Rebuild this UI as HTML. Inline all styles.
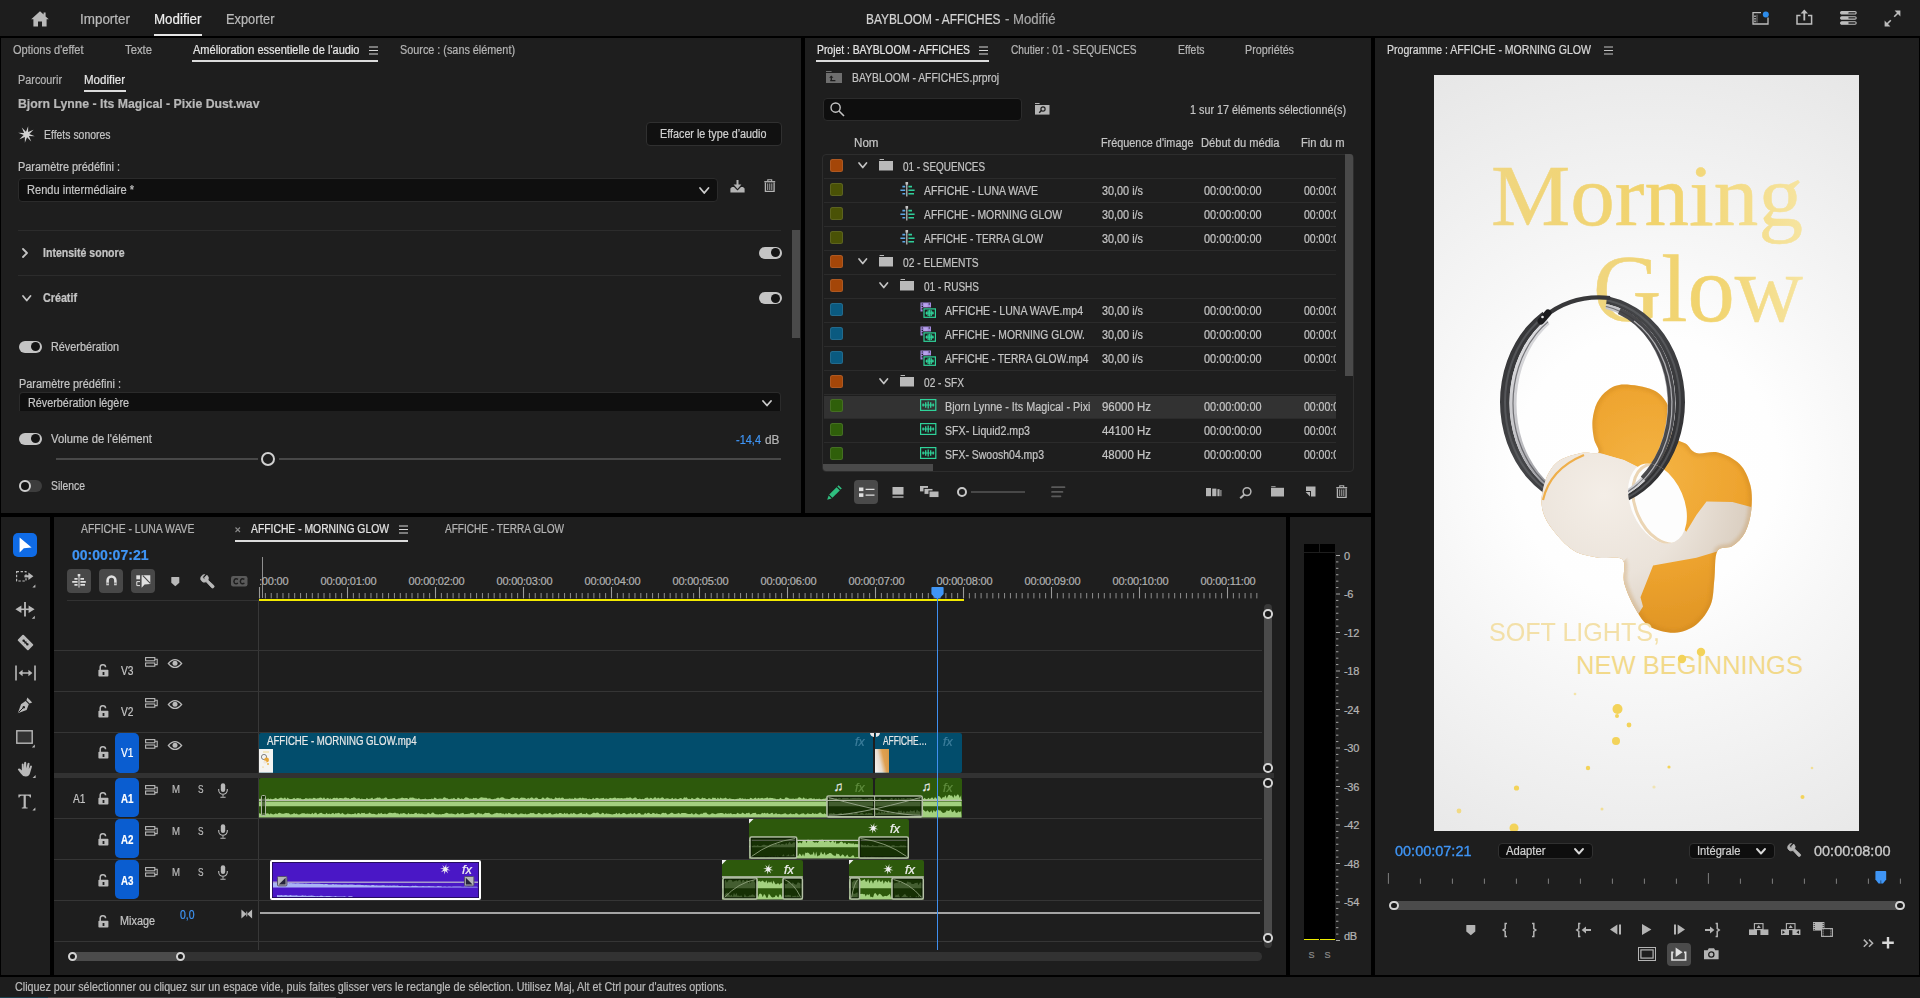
<!DOCTYPE html>
<html lang="fr"><head><meta charset="utf-8"><title>Premiere Pro</title><style>
html,body{margin:0;padding:0}
body{width:1920px;height:998px;background:#000;position:relative;overflow:hidden;font-family:"Liberation Sans",sans-serif;font-size:12px;color:#c4c4c4}
body>div,body>span,body>svg{position:absolute}
span{white-space:nowrap;-webkit-text-stroke-width:0.22px}
svg{overflow:visible}
div{box-sizing:border-box}
</style></head><body>
<div style="left:0px;top:0px;width:1920px;height:36px;background:#1d1d1d;"></div>
<svg style="left:31px;top:10.5px;" width="18" height="16" viewBox="0 0 18 16"><path d="M9 0.3 L0.2 8.3 H2.4 V15.6 H7 V10.6 H11 V15.6 H15.6 V8.3 H17.8 L14.6 5.4 V1.6 H12.6 V3.6 Z" fill="#b9b9b9"/></svg>
<span id="t1" style="left:80px;top:10.0px;font-size:14px;line-height:18px;color:#b9b9b9;transform:scaleX(0.9592);transform-origin:0 50%;">Importer</span>
<span id="t2" style="left:154px;top:10.0px;font-size:14px;line-height:18px;color:#ececec;transform:scaleX(0.9539);transform-origin:0 50%;">Modifier</span>
<div style="left:154px;top:33.5px;width:47.5px;height:2px;background:#e6e6e6;"></div>
<span id="t3" style="left:226px;top:10.0px;font-size:14px;line-height:18px;color:#b9b9b9;transform:scaleX(0.9164);transform-origin:0 50%;">Exporter</span>
<span id="t4" style="left:865.5px;top:10.0px;font-size:14px;line-height:18px;color:#d2d2d2;transform:scaleX(0.8489);transform-origin:0 50%;">BAYBLOOM - AFFICHES</span>
<span id="t5" style="left:1005px;top:10.0px;font-size:14px;line-height:18px;color:#a8a8a8;transform:scaleX(0.9406);transform-origin:0 50%;">- Modifié</span>
<svg style="left:1751.5px;top:9px;" width="18" height="17" viewBox="0 0 18 17"><path d="M9 3.6 H1 V15 H16 V8.5" fill="none" stroke="#bdbdbd" stroke-width="1.3"/><path d="M3 6.4v1.6M3 9v1.6M3 11.6v1.6" stroke="#bdbdbd" stroke-width="1.5"/><path d="M5 5.6V13.6" stroke="#bdbdbd" stroke-width="0.6"/><circle cx="13.8" cy="5.4" r="3" fill="#2d8ceb"/></svg>
<svg style="left:1795.5px;top:9px;" width="17" height="16" viewBox="0 0 17 16"><path d="M4.5 6.5 H1 V15 H15.6 V6.5 H12" fill="none" stroke="#bdbdbd" stroke-width="1.5"/><path d="M8.3 11.5 V2" stroke="#bdbdbd" stroke-width="1.8"/><path d="M4.6 4.6 L8.3 0.6 L12 4.6 Z" fill="#bdbdbd"/></svg>
<svg style="left:1839.5px;top:10.5px;" width="17" height="14" viewBox="0 0 17 14"><g fill="none" stroke="#bdbdbd" stroke-width="1.1"><rect x="0.6" y="0.6" width="15.6" height="2.4" rx="1.2"/><rect x="0.6" y="5.7" width="15.6" height="2.4" rx="1.2"/><rect x="0.6" y="10.8" width="15.6" height="2.4" rx="1.2"/></g><g fill="#bdbdbd"><rect x="0.6" y="0.6" width="8" height="2.4" rx="1.2"/><rect x="0.6" y="5.7" width="8" height="2.4" rx="1.2"/><rect x="0.6" y="10.8" width="8" height="2.4" rx="1.2"/></g></svg>
<svg style="left:1883.5px;top:9.5px;" width="17" height="17" viewBox="0 0 17 17"><path d="M10.2 6.8 L15 2" stroke="#bdbdbd" stroke-width="1.6"/><path d="M10.6 0.6 H16.4 V6.4 Z" fill="#bdbdbd"/><path d="M6.8 10.2 L2 15" stroke="#bdbdbd" stroke-width="1.6"/><path d="M0.6 10.6 V16.4 H6.4 Z" fill="#bdbdbd"/></svg>
<div style="left:0px;top:977px;width:1920px;height:21px;background:#1d1d1d;"></div>
<span id="t6" style="left:15px;top:978.5px;font-size:12px;line-height:16px;color:#b9b9b9;transform:scaleX(0.8944);transform-origin:0 50%;">Cliquez pour sélectionner ou cliquez sur un espace vide, puis faites glisser vers le rectangle de sélection. Utilisez Maj, Alt et Ctrl pour d'autres options.</span>
<div style="left:0px;top:996.7px;width:48px;height:1.3px;background:#1d4450;"></div>
<div style="left:48px;top:996.7px;width:288px;height:1.3px;background:#4c4c4c;"></div>
<div style="left:1px;top:38px;width:800px;height:475px;background:#1e1e1e;"></div>
<span id="t7" style="left:13px;top:42.0px;font-size:12px;line-height:16px;color:#b4b4b4;transform:scaleX(0.9180);transform-origin:0 50%;">Options d'effet</span>
<span id="t8" style="left:125px;top:42.0px;font-size:12px;line-height:16px;color:#b4b4b4;transform:scaleX(0.9412);transform-origin:0 50%;">Texte</span>
<span id="t9" style="left:193px;top:42.0px;font-size:12px;line-height:16px;color:#e4e4e4;transform:scaleX(0.9195);transform-origin:0 50%;">Amélioration essentielle de l'audio</span>
<svg style="left:369px;top:46px;" width="9" height="9" viewBox="0 0 9 9"><path d="M0 1h9M0 4.5h9M0 8h9" stroke="#d8d8d8" stroke-width="1.1"/></svg>
<div style="left:192px;top:60px;width:186px;height:1.5px;background:#dcdcdc;"></div>
<span id="t10" style="left:400px;top:42.0px;font-size:12px;line-height:16px;color:#b4b4b4;transform:scaleX(0.9027);transform-origin:0 50%;">Source : (sans élément)</span>
<span id="t11" style="left:18px;top:72.0px;font-size:12px;line-height:16px;color:#b4b4b4;transform:scaleX(0.9037);transform-origin:0 50%;">Parcourir</span>
<span id="t12" style="left:84px;top:72.0px;font-size:12px;line-height:16px;color:#e4e4e4;transform:scaleX(0.9605);transform-origin:0 50%;">Modifier</span>
<div style="left:84px;top:90px;width:41.5px;height:1.8px;background:#dcdcdc;"></div>
<span id="t13" style="left:18px;top:95.0px;font-size:13.5px;line-height:18px;color:#b8b8b8;font-weight:700;transform:scaleX(0.9085);transform-origin:0 50%;">Bjorn Lynne - Its Magical - Pixie Dust.wav</span>
<svg style="left:18px;top:125.5px;" width="17" height="17" viewBox="0 0 17 17"><polygon points="10.16,0.16 10.11,6.10 15.57,3.78 11.33,7.94 16.84,10.16 10.90,10.11 13.22,15.57 9.06,11.33 6.84,16.84 6.89,10.90 1.43,13.22 5.67,9.06 0.16,6.84 6.10,6.89 3.78,1.43 7.94,5.67" fill="#d0d0d0"/></svg>
<span id="t14" style="left:44px;top:126.5px;font-size:12px;line-height:16px;color:#c4c4c4;transform:scaleX(0.8693);transform-origin:0 50%;">Effets sonores</span>
<div style="left:646px;top:122px;width:135.5px;height:23.6px;background:#111111;border:1px solid #303030;border-radius:4px;"></div>
<span id="t15" style="left:660px;top:126.0px;font-size:12px;line-height:16px;color:#d0d0d0;transform:scaleX(0.8985);transform-origin:0 50%;">Effacer le type d’audio</span>
<span id="t16" style="left:18px;top:159.0px;font-size:12px;line-height:16px;color:#c4c4c4;transform:scaleX(0.9102);transform-origin:0 50%;">Paramètre prédéfini :</span>
<div style="left:18px;top:178px;width:699.5px;height:23.5px;background:#0f0f0f;border:1px solid #2b2b2b;border-radius:4px;"></div>
<span id="t17" style="left:27px;top:181.5px;font-size:12px;line-height:16px;color:#c4c4c4;transform:scaleX(0.9219);transform-origin:0 50%;">Rendu intermédiaire *</span>
<svg style="left:698.5px;top:186.5px;" width="10.5" height="7" viewBox="0 0 10.5 7"><path d="M1 1 L5.25 6 L9.5 1" fill="none" stroke="#cccccc" stroke-width="1.8" stroke-linecap="round" stroke-linejoin="round"/></svg>
<svg style="left:730px;top:179.5px;" width="15" height="13" viewBox="0 0 15 13"><path d="M7.5 0 V7" stroke="#b4b4b4" stroke-width="2"/><path d="M3.6 4.6 L7.5 9 L11.4 4.6 Z" fill="#b4b4b4"/><path d="M0.4 8.4 L2 7 H4 L7.5 10.4 L11 7 H13 L14.6 8.4 V12.6 H0.4 Z" fill="#b4b4b4"/></svg>
<svg style="left:764px;top:179.3px;" width="11.5" height="13" viewBox="0 0 11.5 13"><path d="M0.300 2.700 H11.200" stroke="#b4b4b4" stroke-width="1.300"/><path d="M3.800 2.200 V0.700 H7.700 V2.200" fill="none" stroke="#b4b4b4" stroke-width="1.100"/><path d="M1.400 3.400 V12.300 H10.100 V3.400" fill="none" stroke="#b4b4b4" stroke-width="1.300"/><path d="M3.700 4.400 V11 M5.750 4.400 V11 M7.800 4.400 V11" stroke="#b4b4b4" stroke-width="0.900"/></svg>
<div style="left:18px;top:230px;width:763px;height:1px;background:#2c2c2c;"></div>
<svg style="left:22px;top:247.5px;" width="6" height="10" viewBox="0 0 6 10"><path d="M1 1 L5 5.0 L1 9" fill="none" stroke="#c4c4c4" stroke-width="1.8" stroke-linecap="round" stroke-linejoin="round"/></svg>
<span id="t18" style="left:43px;top:244.5px;font-size:12px;line-height:16px;color:#c4c4c4;font-weight:700;transform:scaleX(0.8793);transform-origin:0 50%;">Intensité sonore</span>
<div style="left:758.5px;top:246.5px;width:23px;height:12.5px;background:#c4c4c4;border-radius:7px;"><i style="position:absolute;right:1.6px;top:1.8px;width:9px;height:9px;border-radius:50%;background:#141414"></i></div>
<div style="left:18px;top:274.5px;width:763px;height:1px;background:#2c2c2c;"></div>
<svg style="left:22px;top:294.5px;" width="9.5" height="6.5" viewBox="0 0 9.5 6.5"><path d="M1 1 L4.75 5.5 L8.5 1" fill="none" stroke="#c4c4c4" stroke-width="1.8" stroke-linecap="round" stroke-linejoin="round"/></svg>
<span id="t19" style="left:43px;top:289.5px;font-size:12px;line-height:16px;color:#c4c4c4;font-weight:700;transform:scaleX(0.8944);transform-origin:0 50%;">Créatif</span>
<div style="left:758.5px;top:291.8px;width:23px;height:12.5px;background:#c4c4c4;border-radius:7px;"><i style="position:absolute;right:1.6px;top:1.8px;width:9px;height:9px;border-radius:50%;background:#141414"></i></div>
<div style="left:791.5px;top:229.5px;width:8px;height:108.5px;background:#4a4a4a;"></div>
<div style="left:19px;top:340.5px;width:23px;height:12.5px;background:#c4c4c4;border-radius:7px;"><i style="position:absolute;right:1.6px;top:1.8px;width:9px;height:9px;border-radius:50%;background:#141414"></i></div>
<span id="t20" style="left:51px;top:339.0px;font-size:12px;line-height:16px;color:#c4c4c4;transform:scaleX(0.9022);transform-origin:0 50%;">Réverbération</span>
<span id="t21" style="left:19px;top:375.5px;font-size:12px;line-height:16px;color:#c4c4c4;transform:scaleX(0.9102);transform-origin:0 50%;">Paramètre prédéfini :</span>
<div style="left:19px;top:391.5px;width:762px;height:19px;background:#0f0f0f;border:1px solid #2b2b2b;border-bottom:none;border-radius:4px 4px 0 0;"></div>
<span id="t22" style="left:28px;top:394.5px;font-size:12px;line-height:16px;color:#c4c4c4;transform:scaleX(0.9012);transform-origin:0 50%;">Réverbération légère</span>
<svg style="left:762px;top:399.5px;" width="10" height="6.5" viewBox="0 0 10 6.5"><path d="M1 1 L5.0 5.5 L9 1" fill="none" stroke="#cccccc" stroke-width="1.8" stroke-linecap="round" stroke-linejoin="round"/></svg>
<div style="left:19px;top:432.5px;width:23px;height:12.5px;background:#c4c4c4;border-radius:7px;"><i style="position:absolute;right:1.6px;top:1.8px;width:9px;height:9px;border-radius:50%;background:#141414"></i></div>
<span id="t23" style="left:51px;top:431.0px;font-size:12px;line-height:16px;color:#c4c4c4;transform:scaleX(0.9378);transform-origin:0 50%;">Volume de l'élément</span>
<span id="t24" style="left:735.5px;top:432.0px;font-size:12px;line-height:16px;color:#3f95f5;transform:scaleX(0.9138);transform-origin:0 50%;">-14,4</span>
<span id="t25" style="left:765px;top:432.0px;font-size:12px;line-height:16px;color:#b4b4b4;transform:scaleX(0.9872);transform-origin:0 50%;">dB</span>
<div style="left:56px;top:458px;width:202px;height:1.5px;background:#484848;"></div>
<div style="left:278.5px;top:458px;width:502.5px;height:1.5px;background:#484848;"></div>
<div style="left:260.5px;top:452px;width:14px;height:14px;background:transparent;border:2px solid #d0d0d0;border-radius:50%;"></div>
<div style="left:19px;top:479.5px;width:23px;height:12.5px;background:#3d3d3d;border-radius:7px;"><i style="position:absolute;left:0;top:0.2px;width:8px;height:8px;border-radius:50%;border:2.1px solid #cdcdcd;background:#141414"></i></div>
<span id="t26" style="left:51px;top:478.0px;font-size:12px;line-height:16px;color:#c4c4c4;transform:scaleX(0.8638);transform-origin:0 50%;">Silence</span>
<div style="left:805px;top:38px;width:566px;height:475px;background:#1e1e1e;"></div>
<span id="t27" style="left:817px;top:42.0px;font-size:12px;line-height:16px;color:#e4e4e4;transform:scaleX(0.8636);transform-origin:0 50%;">Projet : BAYBLOOM - AFFICHES</span>
<svg style="left:979px;top:46px;" width="9" height="9" viewBox="0 0 9 9"><path d="M0 1h9M0 4.5h9M0 8h9" stroke="#d8d8d8" stroke-width="1.1"/></svg>
<div style="left:816px;top:60px;width:172.5px;height:1.5px;background:#dcdcdc;"></div>
<span id="t28" style="left:1011px;top:42.0px;font-size:12px;line-height:16px;color:#b4b4b4;transform:scaleX(0.8476);transform-origin:0 50%;">Chutier : 01 - SEQUENCES</span>
<span id="t29" style="left:1178px;top:42.0px;font-size:12px;line-height:16px;color:#b4b4b4;transform:scaleX(0.8697);transform-origin:0 50%;">Effets</span>
<span id="t30" style="left:1245px;top:42.0px;font-size:12px;line-height:16px;color:#b4b4b4;transform:scaleX(0.8957);transform-origin:0 50%;">Propriétés</span>
<svg style="left:826px;top:71px;" width="16" height="12" viewBox="0 0 16 12"><path d="M0 0.5 H5.6" stroke="#6e6e6e" stroke-width="1"/><rect x="0" y="2" width="16" height="10" fill="#6e6e6e"/><path d="M4.2 9.6 H9.4 M5.3 9.6 V5.6" stroke="#1e1e1e" stroke-width="1.3" fill="none"/><path d="M3.2 6.8 L5.3 4.4 L7.4 6.8 Z" fill="#1e1e1e"/></svg>
<span id="t31" style="left:852px;top:70.0px;font-size:12px;line-height:16px;color:#c4c4c4;transform:scaleX(0.8656);transform-origin:0 50%;">BAYBLOOM - AFFICHES.prproj</span>
<div style="left:822.5px;top:97.5px;width:199px;height:23px;background:#0e0e0e;border:1px solid #2b2b2b;border-radius:4px;"></div>
<svg style="left:830px;top:102px;" width="15" height="15" viewBox="0 0 15 15"><circle cx="5.6" cy="5.6" r="4.6" fill="none" stroke="#c4c4c4" stroke-width="1.4"/><path d="M9 9 L14 14" stroke="#c4c4c4" stroke-width="1.6"/></svg>
<svg style="left:1035px;top:102.5px;" width="14.5" height="12" viewBox="0 0 14.5 12"><path d="M0 0.5 H4.6" stroke="#b4b4b4" stroke-width="1"/><rect x="0" y="2" width="14.5" height="9.6" fill="#b4b4b4"/><circle cx="8" cy="6" r="2.1" fill="none" stroke="#1e1e1e" stroke-width="1.2"/><path d="M6.4 7.6 L4.2 9.8" stroke="#1e1e1e" stroke-width="1.4"/></svg>
<span id="t32" style="left:1190px;top:102.0px;font-size:12px;line-height:16px;color:#c4c4c4;transform:scaleX(0.8995);transform-origin:0 50%;">1 sur 17 éléments sélectionné(s)</span>
<span id="t33" style="left:854px;top:135.0px;font-size:12px;line-height:16px;color:#c4c4c4;transform:scaleX(0.9667);transform-origin:0 50%;">Nom</span>
<span id="t34" style="left:1101px;top:135.0px;font-size:12px;line-height:16px;color:#c4c4c4;transform:scaleX(0.9037);transform-origin:0 50%;">Fréquence d'image</span>
<span id="t35" style="left:1201px;top:135.0px;font-size:12px;line-height:16px;color:#c4c4c4;transform:scaleX(0.9264);transform-origin:0 50%;">Début du média</span>
<span id="t36" style="left:1301px;top:135.0px;font-size:12px;line-height:16px;color:#c4c4c4;transform:scaleX(0.9317);transform-origin:0 50%;">Fin du m</span>
<div style="left:822px;top:153.5px;width:532px;height:318px;background:transparent;border:1px solid #2d2d2d;border-radius:4px;"></div>
<div style="left:1345px;top:154px;width:8px;height:222px;background:#4a4a4a;border-radius:0 3px 0 0;"></div>
<div style="left:823px;top:463.5px;width:110px;height:7.5px;background:#4a4a4a;border-radius:0 0 0 3px;"></div>
<div style="left:830px;top:158.7px;width:13px;height:13px;background:#a44608;border-radius:2.5px;border:1px solid rgba(255,255,255,0.10);"></div>
<svg style="left:858px;top:162.0px;" width="9.5" height="6.5" viewBox="0 0 9.5 6.5"><path d="M1 1 L4.75 5.5 L8.5 1" fill="none" stroke="#c4c4c4" stroke-width="1.7" stroke-linecap="round" stroke-linejoin="round"/></svg>
<svg style="left:879px;top:159.0px;" width="14" height="11.5" viewBox="0 0 14 11.5"><path d="M0.6 0.5 H5" stroke="#b9b9b9" stroke-width="1"/><rect x="0" y="2" width="14" height="9.5" fill="#b9b9b9"/></svg>
<span id="t37" style="left:903px;top:159.0px;font-size:12px;line-height:16px;color:#c4c4c4;transform:scaleX(0.8252);transform-origin:0 50%;">01 - SEQUENCES</span>
<div style="left:824px;top:178.0px;width:512px;height:1px;background:#2b2b2b;"></div>
<div style="left:830px;top:182.7px;width:13px;height:13px;background:#4a5206;border-radius:2.5px;border:1px solid rgba(255,255,255,0.10);"></div>
<svg style="left:899.5px;top:182.0px;" width="15" height="15" viewBox="0 0 15 15"><path d="M6.8 1.5 V14.5" stroke="#c4c4c4" stroke-width="1.2"/><rect x="5.5" y="0" width="2.6" height="2.6" fill="#c4c4c4"/><path d="M2.4 4.6 H5.2 M0.4 8.2 H5.2 M2.4 11.8 H5.2" stroke="#5fa8e6" stroke-width="1.6"/><path d="M8.4 4.6 H12 M8.4 8.2 H14.6 M8.4 11.8 H14" stroke="#2fcf9a" stroke-width="1.6"/></svg>
<span id="t38" style="left:924px;top:183.0px;font-size:12px;line-height:16px;color:#c4c4c4;transform:scaleX(0.8723);transform-origin:0 50%;">AFFICHE - LUNA WAVE</span>
<span id="t39" style="left:1102px;top:182.5px;font-size:12px;line-height:16px;color:#c4c4c4;transform:scaleX(0.9036);transform-origin:0 50%;">30,00 i/s</span>
<span id="t40" style="left:1204px;top:182.5px;font-size:12px;line-height:16px;color:#c4c4c4;transform:scaleX(0.9069);transform-origin:0 50%;">00:00:00:00</span>
<span id="t41" style="left:1304px;top:182.5px;font-size:12px;line-height:16px;color:#c4c4c4;transform:scaleX(0.8740);transform-origin:0 50%;">00:00:0</span>
<div style="left:824px;top:202.0px;width:512px;height:1px;background:#2b2b2b;"></div>
<div style="left:830px;top:206.7px;width:13px;height:13px;background:#4a5206;border-radius:2.5px;border:1px solid rgba(255,255,255,0.10);"></div>
<svg style="left:899.5px;top:206.0px;" width="15" height="15" viewBox="0 0 15 15"><path d="M6.8 1.5 V14.5" stroke="#c4c4c4" stroke-width="1.2"/><rect x="5.5" y="0" width="2.6" height="2.6" fill="#c4c4c4"/><path d="M2.4 4.6 H5.2 M0.4 8.2 H5.2 M2.4 11.8 H5.2" stroke="#5fa8e6" stroke-width="1.6"/><path d="M8.4 4.6 H12 M8.4 8.2 H14.6 M8.4 11.8 H14" stroke="#2fcf9a" stroke-width="1.6"/></svg>
<span id="t42" style="left:924px;top:207.0px;font-size:12px;line-height:16px;color:#c4c4c4;transform:scaleX(0.8625);transform-origin:0 50%;">AFFICHE - MORNING GLOW</span>
<span id="t43" style="left:1102px;top:206.5px;font-size:12px;line-height:16px;color:#c4c4c4;transform:scaleX(0.9036);transform-origin:0 50%;">30,00 i/s</span>
<span id="t44" style="left:1204px;top:206.5px;font-size:12px;line-height:16px;color:#c4c4c4;transform:scaleX(0.9069);transform-origin:0 50%;">00:00:00:00</span>
<span id="t45" style="left:1304px;top:206.5px;font-size:12px;line-height:16px;color:#c4c4c4;transform:scaleX(0.8740);transform-origin:0 50%;">00:00:0</span>
<div style="left:824px;top:226.0px;width:512px;height:1px;background:#2b2b2b;"></div>
<div style="left:830px;top:230.7px;width:13px;height:13px;background:#4a5206;border-radius:2.5px;border:1px solid rgba(255,255,255,0.10);"></div>
<svg style="left:899.5px;top:230.0px;" width="15" height="15" viewBox="0 0 15 15"><path d="M6.8 1.5 V14.5" stroke="#c4c4c4" stroke-width="1.2"/><rect x="5.5" y="0" width="2.6" height="2.6" fill="#c4c4c4"/><path d="M2.4 4.6 H5.2 M0.4 8.2 H5.2 M2.4 11.8 H5.2" stroke="#5fa8e6" stroke-width="1.6"/><path d="M8.4 4.6 H12 M8.4 8.2 H14.6 M8.4 11.8 H14" stroke="#2fcf9a" stroke-width="1.6"/></svg>
<span id="t46" style="left:924px;top:231.0px;font-size:12px;line-height:16px;color:#c4c4c4;transform:scaleX(0.8392);transform-origin:0 50%;">AFFICHE - TERRA GLOW</span>
<span id="t47" style="left:1102px;top:230.5px;font-size:12px;line-height:16px;color:#c4c4c4;transform:scaleX(0.9036);transform-origin:0 50%;">30,00 i/s</span>
<span id="t48" style="left:1204px;top:230.5px;font-size:12px;line-height:16px;color:#c4c4c4;transform:scaleX(0.9069);transform-origin:0 50%;">00:00:00:00</span>
<span id="t49" style="left:1304px;top:230.5px;font-size:12px;line-height:16px;color:#c4c4c4;transform:scaleX(0.8740);transform-origin:0 50%;">00:00:0</span>
<div style="left:824px;top:250.0px;width:512px;height:1px;background:#2b2b2b;"></div>
<div style="left:830px;top:254.7px;width:13px;height:13px;background:#a44608;border-radius:2.5px;border:1px solid rgba(255,255,255,0.10);"></div>
<svg style="left:858px;top:258.0px;" width="9.5" height="6.5" viewBox="0 0 9.5 6.5"><path d="M1 1 L4.75 5.5 L8.5 1" fill="none" stroke="#c4c4c4" stroke-width="1.7" stroke-linecap="round" stroke-linejoin="round"/></svg>
<svg style="left:879px;top:255.0px;" width="14" height="11.5" viewBox="0 0 14 11.5"><path d="M0.6 0.5 H5" stroke="#b9b9b9" stroke-width="1"/><rect x="0" y="2" width="14" height="9.5" fill="#b9b9b9"/></svg>
<span id="t50" style="left:903px;top:255.0px;font-size:12px;line-height:16px;color:#c4c4c4;transform:scaleX(0.8512);transform-origin:0 50%;">02 - ELEMENTS</span>
<div style="left:824px;top:274.0px;width:512px;height:1px;background:#2b2b2b;"></div>
<div style="left:830px;top:278.7px;width:13px;height:13px;background:#a44608;border-radius:2.5px;border:1px solid rgba(255,255,255,0.10);"></div>
<svg style="left:879px;top:282.0px;" width="9.5" height="6.5" viewBox="0 0 9.5 6.5"><path d="M1 1 L4.75 5.5 L8.5 1" fill="none" stroke="#c4c4c4" stroke-width="1.7" stroke-linecap="round" stroke-linejoin="round"/></svg>
<svg style="left:900px;top:279.0px;" width="14" height="11.5" viewBox="0 0 14 11.5"><path d="M0.6 0.5 H5" stroke="#b9b9b9" stroke-width="1"/><rect x="0" y="2" width="14" height="9.5" fill="#b9b9b9"/></svg>
<span id="t51" style="left:924px;top:279.0px;font-size:12px;line-height:16px;color:#c4c4c4;transform:scaleX(0.8329);transform-origin:0 50%;">01 - RUSHS</span>
<div style="left:824px;top:298.0px;width:512px;height:1px;background:#2b2b2b;"></div>
<div style="left:830px;top:302.7px;width:13px;height:13px;background:#0a5a80;border-radius:2.5px;border:1px solid rgba(255,255,255,0.10);"></div>
<svg style="left:919.5px;top:301.5px;" width="17" height="17" viewBox="0 0 17 17"><rect x="0.5" y="0.5" width="10.5" height="9" fill="#a48be0"/><path d="M1.6 2 h1.4 M1.6 4.4 h1.4 M1.6 6.8 h1.4 M8.6 2 h1.4" stroke="#1e1e1e" stroke-width="1.2"/><rect x="4" y="1.6" width="3.6" height="5.4" fill="#b9a4ea"/><rect x="2.6" y="5.4" width="14" height="11" fill="#1e1e1e"/><rect x="4" y="6.9" width="11.4" height="8.4" fill="none" stroke="#2fd39a" stroke-width="1.2"/><path d="M5.5 11.100000000000001 H13.9" stroke="#2fd39a" stroke-width="1"/><path d="M6.60 9.600000000000001 V12.600000000000001" stroke="#2fd39a" stroke-width="1.3"/><path d="M8.15 8.3 V13.900000000000002" stroke="#2fd39a" stroke-width="1.3"/><path d="M9.70 7.700000000000001 V14.500000000000002" stroke="#2fd39a" stroke-width="1.3"/><path d="M11.25 8.3 V13.900000000000002" stroke="#2fd39a" stroke-width="1.3"/><path d="M12.80 9.600000000000001 V12.600000000000001" stroke="#2fd39a" stroke-width="1.3"/></svg>
<span id="t52" style="left:945px;top:303.0px;font-size:12px;line-height:16px;color:#c4c4c4;transform:scaleX(0.8770);transform-origin:0 50%;">AFFICHE - LUNA WAVE.mp4</span>
<span id="t53" style="left:1102px;top:302.5px;font-size:12px;line-height:16px;color:#c4c4c4;transform:scaleX(0.9036);transform-origin:0 50%;">30,00 i/s</span>
<span id="t54" style="left:1204px;top:302.5px;font-size:12px;line-height:16px;color:#c4c4c4;transform:scaleX(0.9069);transform-origin:0 50%;">00:00:00:00</span>
<span id="t55" style="left:1304px;top:302.5px;font-size:12px;line-height:16px;color:#c4c4c4;transform:scaleX(0.8740);transform-origin:0 50%;">00:00:0</span>
<div style="left:824px;top:322.0px;width:512px;height:1px;background:#2b2b2b;"></div>
<div style="left:830px;top:326.7px;width:13px;height:13px;background:#0a5a80;border-radius:2.5px;border:1px solid rgba(255,255,255,0.10);"></div>
<svg style="left:919.5px;top:325.5px;" width="17" height="17" viewBox="0 0 17 17"><rect x="0.5" y="0.5" width="10.5" height="9" fill="#a48be0"/><path d="M1.6 2 h1.4 M1.6 4.4 h1.4 M1.6 6.8 h1.4 M8.6 2 h1.4" stroke="#1e1e1e" stroke-width="1.2"/><rect x="4" y="1.6" width="3.6" height="5.4" fill="#b9a4ea"/><rect x="2.6" y="5.4" width="14" height="11" fill="#1e1e1e"/><rect x="4" y="6.9" width="11.4" height="8.4" fill="none" stroke="#2fd39a" stroke-width="1.2"/><path d="M5.5 11.100000000000001 H13.9" stroke="#2fd39a" stroke-width="1"/><path d="M6.60 9.600000000000001 V12.600000000000001" stroke="#2fd39a" stroke-width="1.3"/><path d="M8.15 8.3 V13.900000000000002" stroke="#2fd39a" stroke-width="1.3"/><path d="M9.70 7.700000000000001 V14.500000000000002" stroke="#2fd39a" stroke-width="1.3"/><path d="M11.25 8.3 V13.900000000000002" stroke="#2fd39a" stroke-width="1.3"/><path d="M12.80 9.600000000000001 V12.600000000000001" stroke="#2fd39a" stroke-width="1.3"/></svg>
<span id="t56" style="left:945px;top:327.0px;font-size:12px;line-height:16px;color:#c4c4c4;transform:scaleX(0.8606);transform-origin:0 50%;">AFFICHE - MORNING GLOW.</span>
<span id="t57" style="left:1102px;top:326.5px;font-size:12px;line-height:16px;color:#c4c4c4;transform:scaleX(0.9036);transform-origin:0 50%;">30,00 i/s</span>
<span id="t58" style="left:1204px;top:326.5px;font-size:12px;line-height:16px;color:#c4c4c4;transform:scaleX(0.9069);transform-origin:0 50%;">00:00:00:00</span>
<span id="t59" style="left:1304px;top:326.5px;font-size:12px;line-height:16px;color:#c4c4c4;transform:scaleX(0.8740);transform-origin:0 50%;">00:00:0</span>
<div style="left:824px;top:346.0px;width:512px;height:1px;background:#2b2b2b;"></div>
<div style="left:830px;top:350.7px;width:13px;height:13px;background:#0a5a80;border-radius:2.5px;border:1px solid rgba(255,255,255,0.10);"></div>
<svg style="left:919.5px;top:349.5px;" width="17" height="17" viewBox="0 0 17 17"><rect x="0.5" y="0.5" width="10.5" height="9" fill="#a48be0"/><path d="M1.6 2 h1.4 M1.6 4.4 h1.4 M1.6 6.8 h1.4 M8.6 2 h1.4" stroke="#1e1e1e" stroke-width="1.2"/><rect x="4" y="1.6" width="3.6" height="5.4" fill="#b9a4ea"/><rect x="2.6" y="5.4" width="14" height="11" fill="#1e1e1e"/><rect x="4" y="6.9" width="11.4" height="8.4" fill="none" stroke="#2fd39a" stroke-width="1.2"/><path d="M5.5 11.100000000000001 H13.9" stroke="#2fd39a" stroke-width="1"/><path d="M6.60 9.600000000000001 V12.600000000000001" stroke="#2fd39a" stroke-width="1.3"/><path d="M8.15 8.3 V13.900000000000002" stroke="#2fd39a" stroke-width="1.3"/><path d="M9.70 7.700000000000001 V14.500000000000002" stroke="#2fd39a" stroke-width="1.3"/><path d="M11.25 8.3 V13.900000000000002" stroke="#2fd39a" stroke-width="1.3"/><path d="M12.80 9.600000000000001 V12.600000000000001" stroke="#2fd39a" stroke-width="1.3"/></svg>
<span id="t60" style="left:945px;top:351.0px;font-size:12px;line-height:16px;color:#c4c4c4;transform:scaleX(0.8551);transform-origin:0 50%;">AFFICHE - TERRA GLOW.mp4</span>
<span id="t61" style="left:1102px;top:350.5px;font-size:12px;line-height:16px;color:#c4c4c4;transform:scaleX(0.9036);transform-origin:0 50%;">30,00 i/s</span>
<span id="t62" style="left:1204px;top:350.5px;font-size:12px;line-height:16px;color:#c4c4c4;transform:scaleX(0.9069);transform-origin:0 50%;">00:00:00:00</span>
<span id="t63" style="left:1304px;top:350.5px;font-size:12px;line-height:16px;color:#c4c4c4;transform:scaleX(0.8740);transform-origin:0 50%;">00:00:0</span>
<div style="left:824px;top:370.0px;width:512px;height:1px;background:#2b2b2b;"></div>
<div style="left:830px;top:374.7px;width:13px;height:13px;background:#a44608;border-radius:2.5px;border:1px solid rgba(255,255,255,0.10);"></div>
<svg style="left:879px;top:378.0px;" width="9.5" height="6.5" viewBox="0 0 9.5 6.5"><path d="M1 1 L4.75 5.5 L8.5 1" fill="none" stroke="#c4c4c4" stroke-width="1.7" stroke-linecap="round" stroke-linejoin="round"/></svg>
<svg style="left:900px;top:375.0px;" width="14" height="11.5" viewBox="0 0 14 11.5"><path d="M0.6 0.5 H5" stroke="#b9b9b9" stroke-width="1"/><rect x="0" y="2" width="14" height="9.5" fill="#b9b9b9"/></svg>
<span id="t64" style="left:924px;top:375.0px;font-size:12px;line-height:16px;color:#c4c4c4;transform:scaleX(0.8446);transform-origin:0 50%;">02 - SFX</span>
<div style="left:823.5px;top:395.5px;width:512.5px;height:22.8px;background:#323232;"></div>
<div style="left:824px;top:394.0px;width:512px;height:1px;background:#2b2b2b;"></div>
<div style="left:830px;top:398.7px;width:13px;height:13px;background:#2f5f0a;border-radius:2.5px;border:1px solid rgba(255,255,255,0.10);"></div>
<svg style="left:919.5px;top:398.9px;" width="17" height="13" viewBox="0 0 17 13"><rect x="0.6" y="0.6" width="15.2" height="10.8" fill="none" stroke="#2fd39a" stroke-width="1.2"/><path d="M2.1 6.0 H14.299999999999999" stroke="#2fd39a" stroke-width="1"/><path d="M3.20 4.5 V7.5" stroke="#2fd39a" stroke-width="1.3"/><path d="M5.70 3.2 V8.8" stroke="#2fd39a" stroke-width="1.3"/><path d="M8.20 2.6 V9.4" stroke="#2fd39a" stroke-width="1.3"/><path d="M10.70 3.2 V8.8" stroke="#2fd39a" stroke-width="1.3"/><path d="M13.20 4.5 V7.5" stroke="#2fd39a" stroke-width="1.3"/></svg>
<span id="t65" style="left:945px;top:399.0px;font-size:12px;line-height:16px;color:#c4c4c4;transform:scaleX(0.9002);transform-origin:0 50%;">Bjorn Lynne - Its Magical - Pixi</span>
<span id="t66" style="left:1102px;top:398.5px;font-size:12px;line-height:16px;color:#c4c4c4;transform:scaleX(0.9538);transform-origin:0 50%;">96000  Hz</span>
<span id="t67" style="left:1204px;top:398.5px;font-size:12px;line-height:16px;color:#c4c4c4;transform:scaleX(0.9069);transform-origin:0 50%;">00:00:00:00</span>
<span id="t68" style="left:1304px;top:398.5px;font-size:12px;line-height:16px;color:#c4c4c4;transform:scaleX(0.8740);transform-origin:0 50%;">00:00:0</span>
<div style="left:824px;top:418.0px;width:512px;height:1px;background:#2b2b2b;"></div>
<div style="left:830px;top:422.7px;width:13px;height:13px;background:#2f5f0a;border-radius:2.5px;border:1px solid rgba(255,255,255,0.10);"></div>
<svg style="left:919.5px;top:422.9px;" width="17" height="13" viewBox="0 0 17 13"><rect x="0.6" y="0.6" width="15.2" height="10.8" fill="none" stroke="#2fd39a" stroke-width="1.2"/><path d="M2.1 6.0 H14.299999999999999" stroke="#2fd39a" stroke-width="1"/><path d="M3.20 4.5 V7.5" stroke="#2fd39a" stroke-width="1.3"/><path d="M5.70 3.2 V8.8" stroke="#2fd39a" stroke-width="1.3"/><path d="M8.20 2.6 V9.4" stroke="#2fd39a" stroke-width="1.3"/><path d="M10.70 3.2 V8.8" stroke="#2fd39a" stroke-width="1.3"/><path d="M13.20 4.5 V7.5" stroke="#2fd39a" stroke-width="1.3"/></svg>
<span id="t69" style="left:945px;top:423.0px;font-size:12px;line-height:16px;color:#c4c4c4;transform:scaleX(0.8850);transform-origin:0 50%;">SFX- Liquid2.mp3</span>
<span id="t70" style="left:1102px;top:422.5px;font-size:12px;line-height:16px;color:#c4c4c4;transform:scaleX(0.9538);transform-origin:0 50%;">44100  Hz</span>
<span id="t71" style="left:1204px;top:422.5px;font-size:12px;line-height:16px;color:#c4c4c4;transform:scaleX(0.9069);transform-origin:0 50%;">00:00:00:00</span>
<span id="t72" style="left:1304px;top:422.5px;font-size:12px;line-height:16px;color:#c4c4c4;transform:scaleX(0.8740);transform-origin:0 50%;">00:00:0</span>
<div style="left:824px;top:442.0px;width:512px;height:1px;background:#2b2b2b;"></div>
<div style="left:830px;top:446.7px;width:13px;height:13px;background:#2f5f0a;border-radius:2.5px;border:1px solid rgba(255,255,255,0.10);"></div>
<svg style="left:919.5px;top:446.9px;" width="17" height="13" viewBox="0 0 17 13"><rect x="0.6" y="0.6" width="15.2" height="10.8" fill="none" stroke="#2fd39a" stroke-width="1.2"/><path d="M2.1 6.0 H14.299999999999999" stroke="#2fd39a" stroke-width="1"/><path d="M3.20 4.5 V7.5" stroke="#2fd39a" stroke-width="1.3"/><path d="M5.70 3.2 V8.8" stroke="#2fd39a" stroke-width="1.3"/><path d="M8.20 2.6 V9.4" stroke="#2fd39a" stroke-width="1.3"/><path d="M10.70 3.2 V8.8" stroke="#2fd39a" stroke-width="1.3"/><path d="M13.20 4.5 V7.5" stroke="#2fd39a" stroke-width="1.3"/></svg>
<span id="t73" style="left:945px;top:447.0px;font-size:12px;line-height:16px;color:#c4c4c4;transform:scaleX(0.8731);transform-origin:0 50%;">SFX- Swoosh04.mp3</span>
<span id="t74" style="left:1102px;top:446.5px;font-size:12px;line-height:16px;color:#c4c4c4;transform:scaleX(0.9538);transform-origin:0 50%;">48000  Hz</span>
<span id="t75" style="left:1204px;top:446.5px;font-size:12px;line-height:16px;color:#c4c4c4;transform:scaleX(0.9069);transform-origin:0 50%;">00:00:00:00</span>
<span id="t76" style="left:1304px;top:446.5px;font-size:12px;line-height:16px;color:#c4c4c4;transform:scaleX(0.8740);transform-origin:0 50%;">00:00:0</span>
<div style="left:1336px;top:155px;width:9px;height:308px;background:#1e1e1e;"></div>
<svg style="left:826.5px;top:485px;" width="15" height="15" viewBox="0 0 15 15"><path d="M2.2 9.6 L9.6 2.2 L12.8 5.4 L5.4 12.8 Z" fill="#2fbf7f"/><path d="M10.4 1.4 L11.6 0.2 L14.8 3.4 L13.6 4.6 Z" fill="#2fbf7f"/><path d="M1.6 10.4 L4.6 13.4 L0.2 14.8 Z" fill="#2fbf7f"/></svg>
<div style="left:854px;top:479.8px;width:24px;height:24px;background:#4a4a4a;border-radius:4px;"></div>
<svg style="left:858.5px;top:486.5px;" width="16" height="11" viewBox="0 0 16 11"><rect x="0" y="0.5" width="4.4" height="3.6" fill="#e0e0e0"/><rect x="0" y="6.3" width="4.4" height="3.6" fill="#e0e0e0"/><path d="M6.6 2.3 H15.5 M6.6 8.1 H15.5" stroke="#e0e0e0" stroke-width="1.3"/></svg>
<svg style="left:892px;top:486.5px;" width="12" height="11" viewBox="0 0 12 11"><rect x="0.5" y="0" width="11" height="7.6" fill="#b9b9b9"/><path d="M0.5 10 H11.5" stroke="#b9b9b9" stroke-width="1.4"/></svg>
<svg style="left:920px;top:486px;" width="20" height="12" viewBox="0 0 20 12"><rect x="0" y="0" width="8" height="5.4" fill="#b9b9b9"/><rect x="4" y="2.4" width="9" height="6" fill="#b9b9b9" stroke="#1e1e1e" stroke-width="1"/><rect x="9" y="5" width="10" height="6.6" fill="#b9b9b9" stroke="#1e1e1e" stroke-width="1"/></svg>
<div style="left:956.8px;top:486.8px;width:10.4px;height:10.4px;background:transparent;border:2.2px solid #c9c9c9;border-radius:50%;"></div>
<div style="left:971px;top:491px;width:54px;height:2px;background:#484848;"></div>
<svg style="left:1051.5px;top:486px;" width="13" height="12" viewBox="0 0 13 12"><path d="M0 1.200 H12.500 M0 5.900 H10.500 M0 10.300 H8.500" stroke="#5a5a5a" stroke-width="1.700" stroke-linecap="round"/></svg>
<svg style="left:1205.8px;top:487.8px;" width="16" height="8.5" viewBox="0 0 16 8.5"><rect x="0" y="0" width="5" height="8.2" fill="#b4b4b4"/><rect x="6.2" y="0.6" width="4.2" height="7.600" fill="#b4b4b4"/><rect x="11.400" y="1.200" width="2.200" height="7" fill="#b4b4b4"/><rect x="14.400" y="2" width="1" height="6.200" fill="#b4b4b4"/></svg>
<svg style="left:1239px;top:485.5px;" width="14" height="14" viewBox="0 0 14 14"><circle cx="8" cy="5.600" r="3.900" fill="none" stroke="#b4b4b4" stroke-width="1.500"/><path d="M5.400 8.400 L1.200 12.200" stroke="#b4b4b4" stroke-width="2"/></svg>
<svg style="left:1271px;top:486px;" width="13" height="10.5" viewBox="0 0 13 10.5"><path d="M0.200 0.600 H4.600" stroke="#8e8e8e" stroke-width="1.200"/><rect x="0" y="1.800" width="13" height="8.700" fill="#b4b4b4"/></svg>
<svg style="left:1304.5px;top:486px;" width="11" height="11" viewBox="0 0 11 11"><path d="M1 0.5 H10.5 V10.500 H6 V5 H1 Z" fill="#b4b4b4"/><path d="M0.600 6 L5 6 L5 10.400 Z" fill="#b4b4b4"/></svg>
<svg style="left:1336px;top:484.8px;" width="11.5" height="13" viewBox="0 0 11.5 13"><path d="M0.300 2.700 H11.200" stroke="#b4b4b4" stroke-width="1.300"/><path d="M3.800 2.200 V0.700 H7.700 V2.200" fill="none" stroke="#b4b4b4" stroke-width="1.100"/><path d="M1.400 3.400 V12.300 H10.100 V3.400" fill="none" stroke="#b4b4b4" stroke-width="1.300"/><path d="M3.700 4.400 V11 M5.750 4.400 V11 M7.800 4.400 V11" stroke="#b4b4b4" stroke-width="0.900"/></svg>
<div style="left:1375px;top:38px;width:544px;height:937px;background:#1e1e1e;"></div>
<span id="t77" style="left:1387px;top:42.0px;font-size:12px;line-height:16px;color:#d8d8d8;transform:scaleX(0.8792);transform-origin:0 50%;">Programme : AFFICHE - MORNING GLOW</span>
<svg style="left:1604px;top:46px;" width="9" height="9" viewBox="0 0 9 9"><path d="M0 1h9M0 4.5h9M0 8h9" stroke="#c4c4c4" stroke-width="1.1"/></svg>
<svg style="left:1434px;top:75px;" width="425" height="756" viewBox="0 0 425 756">
<defs>
<radialGradient id="pbg" gradientUnits="userSpaceOnUse" cx="212" cy="392" r="440">
<stop offset="0" stop-color="#ffffff"/><stop offset="0.3" stop-color="#fefefe"/><stop offset="0.5" stop-color="#f7f7f7"/><stop offset="0.75" stop-color="#efefef"/><stop offset="1" stop-color="#e7e7e7"/></radialGradient>
<linearGradient id="gold" x1="0" x2="1" y1="0" y2="0"><stop offset="0" stop-color="#f0d680"/><stop offset="0.55" stop-color="#f1d36c"/><stop offset="1" stop-color="#f6e4a0"/></linearGradient>
<linearGradient id="ringd" x1="0" x2="1" y1="0" y2="1"><stop offset="0" stop-color="#303032"/><stop offset="0.45" stop-color="#444548"/><stop offset="1" stop-color="#2a2a2c"/></linearGradient>
<linearGradient id="rings" x1="0" x2="1" y1="0" y2="1"><stop offset="0" stop-color="#e9e9eb"/><stop offset="0.35" stop-color="#c4c4c8"/><stop offset="0.6" stop-color="#8e8f94"/><stop offset="0.8" stop-color="#c8c8cc"/><stop offset="1" stop-color="#f2f2f3"/></linearGradient>
<radialGradient id="org" cx="0.42" cy="0.38" r="0.75"><stop offset="0" stop-color="#f5b545"/><stop offset="0.65" stop-color="#eea430"/><stop offset="1" stop-color="#d98e22"/></radialGradient>
<radialGradient id="crm" cx="0.42" cy="0.38" r="0.78"><stop offset="0" stop-color="#fbf7f2"/><stop offset="0.65" stop-color="#f1e9e0"/><stop offset="1" stop-color="#d9ccbd"/></radialGradient>
<filter id="b1" x="-10%" y="-10%" width="120%" height="120%"><feGaussianBlur stdDeviation="1.6"/></filter>
<filter id="b2" x="-20%" y="-20%" width="140%" height="140%"><feGaussianBlur stdDeviation="0.7"/></filter>
<filter id="b3" x="-10%" y="-10%" width="120%" height="120%"><feGaussianBlur stdDeviation="0.5"/></filter>
<clipPath id="pc"><rect x="0" y="0" width="425" height="756"/></clipPath>
<clipPath id="pend"><path d="M190.2 309.6 C197.8 309.6 211.9 311.7 219.1 315.0 C226.3 318.3 230.6 323.7 233.5 329.4 C236.4 335.1 234.9 343.5 236.4 349.2 C237.9 355.0 239.9 360.4 242.5 363.7 C245.2 367.0 249.0 366.7 252.3 369.1 C255.6 371.5 257.1 376.7 262.4 378.1 C267.7 379.5 276.8 375.6 284.0 377.4 C291.2 379.2 300.2 383.4 305.6 388.9 C311.1 394.4 314.5 402.7 316.5 410.6 C318.4 418.4 318.1 428.0 317.2 435.8 C316.3 443.6 314.2 451.5 311.1 457.4 C307.9 463.3 303.1 468.0 298.4 471.1 C293.8 474.3 286.3 470.7 283.3 476.2 C280.3 481.7 281.5 495.4 280.4 504.3 C279.3 513.2 279.8 522.0 276.8 529.6 C273.8 537.1 268.4 544.7 262.4 549.4 C256.4 554.1 248.5 557.4 240.7 557.7 C232.9 558.0 222.1 555.3 215.5 551.2 C208.9 547.1 205.3 540.4 201.1 533.2 C196.9 526.0 192.4 516.0 190.2 507.9 C188.1 499.8 192.7 488.7 188.4 484.5 C184.2 480.3 173.1 484.2 165.0 482.7 C156.9 481.2 147.6 480.3 139.8 475.5 C131.9 470.7 123.4 461.0 118.1 453.8 C112.8 446.6 109.2 440.0 108.0 432.2 C106.8 424.4 108.3 414.5 110.9 406.9 C113.5 399.4 117.5 391.9 123.5 387.1 C129.5 382.3 140.2 379.7 147.0 378.1 C153.8 376.5 162.1 379.8 164.3 377.4 C166.4 375.0 160.9 369.0 160.0 363.7 C159.0 358.4 158.0 351.7 158.5 345.6 C159.1 339.6 160.6 332.7 163.2 327.6 C165.8 322.5 169.5 318.0 174.0 315.0 C178.5 312.0 182.7 309.6 190.2 309.6 Z"/></clipPath>
<clipPath id="holec"><ellipse cx="223.500" cy="428.500" rx="26.500" ry="42" transform="rotate(-23 223.500 428.500)"/></clipPath>
<clipPath id="thickc"><path clip-rule="evenodd" d="M0 0 H425 V756 H0 Z M158.500 327 L63.500 155 L187.500 119 Z"/></clipPath>
<radialGradient id="crm2" gradientUnits="userSpaceOnUse" cx="145" cy="418" r="62"><stop offset="0" stop-color="#fbf7f2"/><stop offset="0.65" stop-color="#f2eae1"/><stop offset="1" stop-color="#e0d4c6"/></radialGradient>
<radialGradient id="org2" gradientUnits="userSpaceOnUse" cx="215" cy="400" r="150"><stop offset="0" stop-color="#f4b444"/><stop offset="0.6" stop-color="#eea42f"/><stop offset="1" stop-color="#e29726"/></radialGradient>
<radialGradient id="crm3" gradientUnits="userSpaceOnUse" cx="170" cy="420" r="150"><stop offset="0" stop-color="#f4eee7"/><stop offset="0.55" stop-color="#ebe3da"/><stop offset="1" stop-color="#d9cdbf"/></radialGradient>
</defs>
<rect width="425" height="756" fill="url(#pbg)"/>
<g clip-path="url(#pc)">
<text x="57" y="149.800" font-family="Liberation Serif,serif" font-size="87.500" fill="url(#gold)" stroke="url(#gold)" stroke-width="0.5" textLength="312" lengthAdjust="spacingAndGlyphs">Morning</text>
<text x="159" y="245.500" font-family="Liberation Serif,serif" font-size="96" fill="url(#gold)" stroke="url(#gold)" stroke-width="0.5" textLength="210" lengthAdjust="spacingAndGlyphs">Glow</text>

<!-- pendant -->
<g filter="url(#b3)">
<path d="M190.2 309.6 C197.8 309.6 211.9 311.7 219.1 315.0 C226.3 318.3 230.6 323.7 233.5 329.4 C236.4 335.1 234.9 343.5 236.4 349.2 C237.9 355.0 239.9 360.4 242.5 363.7 C245.2 367.0 249.0 366.7 252.3 369.1 C255.6 371.5 257.1 376.7 262.4 378.1 C267.7 379.5 276.8 375.6 284.0 377.4 C291.2 379.2 300.2 383.4 305.6 388.9 C311.1 394.4 314.5 402.7 316.5 410.6 C318.4 418.4 318.1 428.0 317.2 435.8 C316.3 443.6 314.2 451.5 311.1 457.4 C307.9 463.3 303.1 468.0 298.4 471.1 C293.8 474.3 286.3 470.7 283.3 476.2 C280.3 481.7 281.5 495.4 280.4 504.3 C279.3 513.2 279.8 522.0 276.8 529.6 C273.8 537.1 268.4 544.7 262.4 549.4 C256.4 554.1 248.5 557.4 240.7 557.7 C232.9 558.0 222.1 555.3 215.5 551.2 C208.9 547.1 205.3 540.4 201.1 533.2 C196.9 526.0 192.4 516.0 190.2 507.9 C188.1 499.8 192.7 488.7 188.4 484.5 C184.2 480.3 173.1 484.2 165.0 482.7 C156.9 481.2 147.6 480.3 139.8 475.5 C131.9 470.7 123.4 461.0 118.1 453.8 C112.8 446.6 109.2 440.0 108.0 432.2 C106.8 424.4 108.3 414.5 110.9 406.9 C113.5 399.4 117.5 391.9 123.5 387.1 C129.5 382.3 140.2 379.7 147.0 378.1 C153.8 376.5 162.1 379.8 164.3 377.4 C166.4 375.0 160.9 369.0 160.0 363.7 C159.0 358.4 158.0 351.7 158.5 345.6 C159.1 339.6 160.6 332.7 163.2 327.6 C165.8 322.5 169.5 318.0 174.0 315.0 C178.5 312.0 182.7 309.6 190.2 309.6 Z" fill="url(#org2)"/>
<g clip-path="url(#pend)">
<path d="M100.1 363.7 L164.3 377.4 L190.2 385.3 L204.7 392.5 L226.3 428.6 L252.3 456.7 L262.4 440.1 L272.5 426.4 L298.4 427.1 L320.1 432.9 L327.3 479.1 L284.0 476.2 L262.4 482.7 L219.1 490.6 L206.5 522.3 L209.0 531.4 L190.2 562.0 L100.1 562.0 Z" fill="url(#crm3)"/>
<path d="M190.2 309.6 C197.8 309.6 211.9 311.7 219.1 315.0 C226.3 318.3 230.6 323.7 233.5 329.4 C236.4 335.1 234.9 343.5 236.4 349.2 C237.9 355.0 239.9 360.4 242.5 363.7 C245.2 367.0 249.0 366.7 252.3 369.1 C255.6 371.5 257.1 376.7 262.4 378.1 C267.7 379.5 276.8 375.6 284.0 377.4 C291.2 379.2 300.2 383.4 305.6 388.9 C311.1 394.4 314.5 402.7 316.5 410.6 C318.4 418.4 318.1 428.0 317.2 435.8 C316.3 443.6 314.2 451.5 311.1 457.4 C307.9 463.3 303.1 468.0 298.4 471.1 C293.8 474.3 286.3 470.7 283.3 476.2 C280.3 481.7 281.5 495.4 280.4 504.3 C279.3 513.2 279.8 522.0 276.8 529.6 C273.8 537.1 268.4 544.7 262.4 549.4 C256.4 554.1 248.5 557.4 240.7 557.7 C232.9 558.0 222.1 555.3 215.5 551.2 C208.9 547.1 205.3 540.4 201.1 533.2 C196.9 526.0 192.4 516.0 190.2 507.9 C188.1 499.8 192.7 488.7 188.4 484.5 C184.2 480.3 173.1 484.2 165.0 482.7 C156.9 481.2 147.6 480.3 139.8 475.5 C131.9 470.7 123.4 461.0 118.1 453.8 C112.8 446.6 109.2 440.0 108.0 432.2 C106.8 424.4 108.3 414.5 110.9 406.9 C113.5 399.4 117.5 391.9 123.5 387.1 C129.5 382.3 140.2 379.7 147.0 378.1 C153.8 376.5 162.1 379.8 164.3 377.4 C166.4 375.0 160.9 369.0 160.0 363.7 C159.0 358.4 158.0 351.7 158.5 345.6 C159.1 339.6 160.6 332.7 163.2 327.6 C165.8 322.5 169.5 318.0 174.0 315.0 C178.5 312.0 182.7 309.6 190.2 309.6 Z" fill="none" stroke="#b9771a" stroke-width="7" opacity="0.22" filter="url(#b1)"/>
</g>
</g>

<!-- hoop -->
<g id="hoop">
<g clip-path="url(#thickc)">
<path fill-rule="evenodd" fill="url(#ringd)" d="M66 327 A92.500 107 0 1 0 251 327 A92.500 107 0 1 0 66 327 Z M75.500 328 A83 100.500 0 1 0 241.500 328 A83 100.500 0 1 0 75.500 328 Z"/>
<path fill-rule="evenodd" fill="url(#rings)" d="M75.500 328 A83 100.500 0 1 0 241.500 328 A83 100.500 0 1 0 75.500 328 Z M82.500 329 A75.500 96.500 0 1 0 233.500 329 A75.500 96.500 0 1 0 82.500 329 Z"/>
<ellipse cx="158.500" cy="327.500" rx="87.500" ry="103.500" fill="none" stroke="#6a6b70" stroke-width="2" opacity="0.55"/>
<ellipse cx="158.300" cy="328.500" rx="79.300" ry="98.500" fill="none" stroke="#4a4a4e" stroke-width="1.200" opacity="0.7"/>
<path d="M185.400 235.900 A79.300 98.500 0 0 1 209.300 404" fill="none" stroke="#38383b" stroke-width="7" opacity="0.88"/>
<path d="M200 246 A77 97 0 0 1 204 410" fill="none" stroke="#c8c8cc" stroke-width="1.300" opacity="0.8"/>
</g>
<path d="M110 242 Q138 219 176 223" fill="none" stroke="#38383a" stroke-width="4.200"/>
<path d="M107 246 L114 238" stroke="#1c1c1e" stroke-width="7" stroke-linecap="round"/>
<circle cx="108.500" cy="242" r="1.300" fill="#e8e8e8"/>
</g>
<!-- cream lobe over the hoop (hoop passes behind) -->
<g clip-path="url(#pend)" filter="url(#b3)">
<path d="M100 372 L164 378 L190 385 L204 392 L198 420 L196 446 L204 470 L190 486 L100 486 Z" fill="url(#crm3)"/>
</g>
<path d="M109 425 Q116 394 150 380" fill="none" stroke="#eea430" stroke-width="2.200" opacity="0.85"/>
<!-- hole -->
<ellipse cx="223.500" cy="428.500" rx="26.500" ry="42" fill="#fdfdfd" transform="rotate(-23 223.500 428.500)"/>
<g clip-path="url(#holec)">
<ellipse cx="228" cy="431" rx="27" ry="42" fill="none" stroke="#c98a2a" stroke-width="3" opacity="0.35" transform="rotate(-23 223.500 428.500)"/>
<use href="#hoop"/>
</g>

<text x="55" y="566" font-family="Liberation Sans,sans-serif" font-size="26" fill="#f3e0a8" textLength="171" lengthAdjust="spacingAndGlyphs" filter="url(#b2)">SOFT LIGHTS,</text>
<text x="142" y="598.5" font-family="Liberation Sans,sans-serif" font-size="25.5" fill="#f2d98a" textLength="227" lengthAdjust="spacingAndGlyphs">NEW BEGINNINGS</text>
<g fill="#f3d35a">
<circle cx="183.500" cy="634" r="5" filter="url(#b2)"/><circle cx="182" cy="666" r="4"/><circle cx="195" cy="650" r="2.400"/><circle cx="183" cy="641" r="2"/>
<circle cx="267" cy="577" r="4.200" filter="url(#b2)"/><circle cx="248" cy="584" r="4.200" filter="url(#b2)"/>
<circle cx="82.500" cy="713" r="2.600"/><circle cx="154" cy="693" r="2.200"/><circle cx="235" cy="692" r="1.600"/><circle cx="368.500" cy="722" r="2"/>
<circle cx="25" cy="736" r="2.400" opacity="0.7"/><circle cx="80" cy="753" r="4.500" filter="url(#b2)"/><circle cx="168" cy="734" r="1.500" opacity="0.6"/><circle cx="220" cy="712" r="1.600" opacity="0.4"/><circle cx="378" cy="693" r="1.300" opacity="0.6"/><circle cx="141" cy="619" r="1.300" opacity="0.5"/>
</g>
</g>
</svg>
<span id="t78" style="left:1395px;top:842.0px;font-size:14.5px;line-height:18px;color:#3f95f5;transform:scaleX(0.9986);transform-origin:0 50%;-webkit-text-stroke:0.35px #3f95f5;">00:00:07:21</span>
<div style="left:1497.5px;top:842.5px;width:95px;height:16.5px;background:#0e0e0e;border:1px solid #303030;border-radius:4px;"></div>
<span id="t79" style="left:1506px;top:843.0px;font-size:12px;line-height:16px;color:#d0d0d0;transform:scaleX(0.9398);transform-origin:0 50%;">Adapter</span>
<svg style="left:1574px;top:847.5px;" width="10" height="6.5" viewBox="0 0 10 6.5"><path d="M1 1 L5.0 5.5 L9 1" fill="none" stroke="#d8d8d8" stroke-width="1.9" stroke-linecap="round" stroke-linejoin="round"/></svg>
<div style="left:1688.5px;top:842.5px;width:86px;height:16.5px;background:#0e0e0e;border:1px solid #303030;border-radius:4px;"></div>
<span id="t80" style="left:1697px;top:843.0px;font-size:12px;line-height:16px;color:#d0d0d0;transform:scaleX(0.9314);transform-origin:0 50%;">Intégrale</span>
<svg style="left:1756px;top:847.5px;" width="10" height="6.5" viewBox="0 0 10 6.5"><path d="M1 1 L5.0 5.5 L9 1" fill="none" stroke="#d8d8d8" stroke-width="1.9" stroke-linecap="round" stroke-linejoin="round"/></svg>
<svg style="left:1787px;top:843px;" width="14" height="14" viewBox="0 0 14 14"><g transform="scale(1.0)"><path d="M4.600 0.500 A4 4 0 0 0 0.900 5.900 A4 4 0 0 0 6 7.600 L11.200 13.200 A1.500 1.500 0 0 0 13.400 11.200 L7.700 5.900 A4 4 0 0 0 6.700 1.100 L4.400 3.400 L5 5 L3.400 4.600 L2.500 2.900 Z" fill="#b4b4b4" stroke="#b4b4b4" stroke-width="0.700" stroke-linejoin="round"/></g></svg>
<span id="t81" style="left:1813.5px;top:842.0px;font-size:14.5px;line-height:18px;color:#c9c9c9;transform:scaleX(0.9986);transform-origin:0 50%;-webkit-text-stroke:0.35px #c9c9c9;">00:00:08:00</span>
<svg style="left:1388px;top:870px;" width="520" height="14" viewBox="0 0 520 14"><path d="M0.4 3.0 V13.8" stroke="#8a8a8a" stroke-width="0.9"/><path d="M32.4 8.6 V13.8" stroke="#8a8a8a" stroke-width="0.9"/><path d="M64.4 8.6 V13.8" stroke="#8a8a8a" stroke-width="0.9"/><path d="M96.4 8.6 V13.8" stroke="#8a8a8a" stroke-width="0.9"/><path d="M128.4 8.6 V13.8" stroke="#8a8a8a" stroke-width="0.9"/><path d="M160.4 8.6 V13.8" stroke="#8a8a8a" stroke-width="0.9"/><path d="M192.4 8.6 V13.8" stroke="#8a8a8a" stroke-width="0.9"/><path d="M224.4 8.6 V13.8" stroke="#8a8a8a" stroke-width="0.9"/><path d="M256.4 8.6 V13.8" stroke="#8a8a8a" stroke-width="0.9"/><path d="M288.4 8.6 V13.8" stroke="#8a8a8a" stroke-width="0.9"/><path d="M320.4 3.0 V13.8" stroke="#8a8a8a" stroke-width="0.9"/><path d="M352.4 8.6 V13.8" stroke="#8a8a8a" stroke-width="0.9"/><path d="M384.4 8.6 V13.8" stroke="#8a8a8a" stroke-width="0.9"/><path d="M416.4 8.6 V13.8" stroke="#8a8a8a" stroke-width="0.9"/><path d="M448.4 8.6 V13.8" stroke="#8a8a8a" stroke-width="0.9"/><path d="M480.4 8.6 V13.8" stroke="#8a8a8a" stroke-width="0.9"/><path d="M512.4 8.6 V13.8" stroke="#8a8a8a" stroke-width="0.9"/></svg>
<svg style="left:1874.5px;top:870.5px;" width="12" height="13" viewBox="0 0 12 13"><path d="M0.4 0.8 Q0.4 0 1.2 0 H10.4 Q11.2 0 11.2 0.8 V8.4 L8 12.6 H3.6 L0.4 8.4 Z" fill="#3f95f5"/><path d="M5.8 9.4 V13" stroke="#1d3f66" stroke-width="0.8"/></svg>
<div style="left:1392px;top:901px;width:1510px;height:9px;background:transparent;"></div>
<div style="left:1392px;top:901px;width:510px;height:9px;background:#4b4b4b;border-radius:4.5px;"></div>
<div style="left:1389.4px;top:900.7px;width:9.6px;height:9.6px;background:#1a1a1a;border:2px solid #d4d4d4;border-radius:50%;"></div>
<div style="left:1895.4px;top:900.7px;width:9.6px;height:9.6px;background:#1a1a1a;border:2px solid #d4d4d4;border-radius:50%;"></div>
<svg style="left:1465.5px;top:925px;" width="10" height="10.5" viewBox="0 0 10 10.5"><path d="M0.3 0.6 Q0.3 0 0.9 0 H8.7 Q9.3 0 9.3 0.6 V6.4 L4.8 10.2 L0.3 6.4 Z" fill="#b4b4b4"/></svg>
<svg style="left:1501.5px;top:923px;" width="6" height="14" viewBox="0 0 6 14"><path d="M5 0.6 H3.2 V5.6 L1.2 7 L3.2 8.4 V13.4 H5" fill="none" stroke="#b4b4b4" stroke-width="1.5"/></svg>
<svg style="left:1530.5px;top:923px;" width="6" height="14" viewBox="0 0 6 14"><path d="M1 0.6 H2.8 V5.6 L4.8 7 L2.8 8.4 V13.4 H1" fill="none" stroke="#b4b4b4" stroke-width="1.5"/></svg>
<svg style="left:1576px;top:923px;" width="16" height="14" viewBox="0 0 16 14"><path d="M4.4 0.6 H2.8 V5.6 L0.8 7 L2.8 8.4 V13.4 H4.4" fill="none" stroke="#b4b4b4" stroke-width="1.5"/><path d="M15 7 H8" stroke="#b4b4b4" stroke-width="2"/><path d="M10 3.4 L5.6 7 L10 10.6 Z" fill="#b4b4b4"/></svg>
<svg style="left:1609.5px;top:924px;" width="12" height="11" viewBox="0 0 12 11"><path d="M7.4 0.6 V10.4 L0 5.5 Z" fill="#b4b4b4"/><path d="M10 0.6 V10.4" stroke="#b4b4b4" stroke-width="2"/></svg>
<svg style="left:1642px;top:924px;" width="10" height="11" viewBox="0 0 10 11"><path d="M0 0 V11 L9.4 5.5 Z" fill="#b4b4b4"/></svg>
<svg style="left:1672.5px;top:924px;" width="12" height="11" viewBox="0 0 12 11"><path d="M4.6 0.6 V10.4 L12 5.5 Z" fill="#b4b4b4"/><path d="M2 0.6 V10.4" stroke="#b4b4b4" stroke-width="2"/></svg>
<svg style="left:1703.5px;top:923px;" width="16" height="14" viewBox="0 0 16 14"><path d="M11.6 0.6 H13.2 V5.6 L15.2 7 L13.2 8.4 V13.4 H11.6" fill="none" stroke="#b4b4b4" stroke-width="1.5"/><path d="M1 7 H8" stroke="#b4b4b4" stroke-width="2"/><path d="M6 3.4 L10.4 7 L6 10.6 Z" fill="#b4b4b4"/></svg>
<svg style="left:1749px;top:923px;" width="19.5" height="12.5" viewBox="0 0 19.5 12.5"><rect x="0" y="6.4" width="8" height="5.6" fill="#b4b4b4"/><rect x="11.4" y="6.4" width="8" height="5.6" fill="#b4b4b4"/><rect x="5.4" y="0.6" width="8.6" height="6" fill="none" stroke="#b4b4b4" stroke-width="1.1"/><path d="M7.6 5 L9.7 2 L11.8 5 Z" fill="#b4b4b4"/></svg>
<svg style="left:1780.5px;top:923px;" width="19.5" height="12.5" viewBox="0 0 19.5 12.5"><rect x="0" y="6.4" width="8" height="5.6" fill="#b4b4b4"/><rect x="11.4" y="6.4" width="8" height="5.6" fill="#b4b4b4"/><rect x="5.4" y="0.6" width="8.6" height="6" fill="none" stroke="#b4b4b4" stroke-width="1.1"/><path d="M7.6 5 L9.7 2 L11.8 5 Z" fill="#b4b4b4"/><path d="M1.4 7.4 L4 9.2 L1.4 11 Z M18 7.4 L15.4 9.2 L18 11 Z" fill="#1e1e1e"/></svg>
<svg style="left:1812.5px;top:922px;" width="20" height="15" viewBox="0 0 20 15"><rect x="0" y="0" width="11.4" height="8.6" fill="#b4b4b4"/><path d="M1.2 1 V8 M10.2 1 V8" stroke="#1e1e1e" stroke-width="1" stroke-dasharray="1 1"/><rect x="8.6" y="6.6" width="10.8" height="7.8" fill="#1e1e1e" stroke="#b4b4b4" stroke-width="1.1"/><path d="M10.2 7.4 V14 M17.8 7.4 V14" stroke="#b4b4b4" stroke-width="1" stroke-dasharray="1 1"/></svg>
<svg style="left:1863px;top:939px;" width="11" height="8.5" viewBox="0 0 11 8.5"><path d="M0.8 0.6 L4.4 4.2 L0.8 7.8 M6 0.6 L9.6 4.2 L6 7.8" fill="none" stroke="#b4b4b4" stroke-width="1.5"/></svg>
<svg style="left:1882px;top:937px;" width="12" height="12" viewBox="0 0 12 12"><path d="M6 0 V11.6 M0.2 5.8 H11.8" stroke="#d8d8d8" stroke-width="2.4"/></svg>
<svg style="left:1638px;top:947px;" width="18" height="14" viewBox="0 0 18 14"><rect x="0.5" y="0.5" width="17" height="13" fill="none" stroke="#b4b4b4" stroke-width="1"/><rect x="2.9" y="2.9" width="12.2" height="8.2" fill="none" stroke="#b4b4b4" stroke-width="1.2"/></svg>
<div style="left:1667px;top:942.5px;width:24px;height:23.5px;background:#4b4b4b;border-radius:4px;"></div>
<svg style="left:1671px;top:946.5px;" width="16" height="14" viewBox="0 0 16 14"><path d="M2.4 5.4 H1 V13 H14.6 V5.4 H13" fill="none" stroke="#e0e0e0" stroke-width="1.7"/><path d="M4.6 0.4 V10 L11.6 5.2 Z" fill="#e0e0e0"/></svg>
<svg style="left:1703.5px;top:948px;" width="15" height="11.5" viewBox="0 0 15 11.5"><path d="M0 2.2 H3.6 L4.8 0.2 H10 L11.2 2.2 H14.6 V11.2 H0 Z" fill="#b4b4b4"/><circle cx="7.3" cy="6.5" r="2.6" fill="none" stroke="#1e1e1e" stroke-width="1.3"/></svg>
<div style="left:1px;top:517px;width:49px;height:458px;background:#1e1e1e;"></div>
<div style="left:13px;top:533px;width:24px;height:24px;background:#0f6be6;border-radius:5px;"></div>
<svg style="left:18px;top:537px;" width="15" height="17" viewBox="0 0 15 17"><path d="M1.6 0.6 V15.4 L5.8 11.2 L13.6 10.6 Z" fill="#ffffff"/></svg>
<svg style="left:15.5px;top:570.5px;" width="20" height="17" viewBox="0 0 20 17"><rect x="0.6" y="0.6" width="9.4" height="9.4" fill="none" stroke="#b9b9b9" stroke-width="1.2" stroke-dasharray="2.4 1.6"/><path d="M8.4 5.3 H13" stroke="#b9b9b9" stroke-width="2.2"/><path d="M12.4 1.6 L17.4 5.3 L12.4 9 Z" fill="#b9b9b9"/><g transform="translate(16.400 13.600)"><path d="M0 3 L3 3 L3 0 Z" fill="#b9b9b9"/></g></svg>
<svg style="left:15px;top:602px;" width="20" height="17" viewBox="0 0 20 17"><path d="M10 0 V14.600" stroke="#b9b9b9" stroke-width="1.8"/><path d="M6.4 3.6 L0.4 7.300 L6.4 11 Z M13.600 3.600 L19.600 7.300 L13.600 11 Z" fill="#b9b9b9"/><path d="M5 7.300 H15" stroke="#b9b9b9" stroke-width="1.6"/><g transform="translate(16.800 13.800)"><path d="M0 3 L3 3 L3 0 Z" fill="#b9b9b9"/></g></svg>
<svg style="left:16.5px;top:633.5px;" width="17" height="17" viewBox="0 0 17 17"><g transform="rotate(45 8.5 8.5)"><rect x="1" y="4.400" width="15" height="8.200" rx="1" fill="#b9b9b9"/><path d="M4.600 8.500 H12.400" stroke="#1e1e1e" stroke-width="1.500"/><path d="M6 7.200 V9.800 M8.500 7.200 V9.800 M11 7.200 V9.800" stroke="#1e1e1e" stroke-width="1"/></g></svg>
<svg style="left:14.5px;top:665px;" width="21" height="16" viewBox="0 0 21 16"><path d="M1 0.500 V15.500 M20 0.500 V15.500" stroke="#b9b9b9" stroke-width="1.600"/><path d="M6 8 H15" stroke="#b9b9b9" stroke-width="1.500"/><path d="M7.600 4.800 L3.600 8 L7.600 11.200 Z M13.400 4.800 L17.400 8 L13.400 11.200 Z" fill="#b9b9b9"/></svg>
<svg style="left:16.5px;top:697px;" width="16" height="17" viewBox="0 0 16 17"><path d="M10.400 0.600 L15.200 5.400 L12.600 6.400 L9.400 3.200 Z" fill="#b9b9b9"/><path d="M8.600 4 L11.800 7.200 L9.600 13 L0.800 16.200 L4 7.200 Z" fill="#b9b9b9"/><path d="M1.400 15.600 L6.200 10.800" stroke="#1e1e1e" stroke-width="1"/><circle cx="6.800" cy="10.200" r="1.200" fill="#1e1e1e"/></svg>
<svg style="left:16px;top:729.5px;" width="20" height="18" viewBox="0 0 20 18"><rect x="0.800" y="0.800" width="15.400" height="12.400" fill="#333" stroke="#b9b9b9" stroke-width="1.400"/><g transform="translate(15.800 14.400)"><path d="M0 3 L3 3 L3 0 Z" fill="#b9b9b9"/></g></svg>
<svg style="left:16.5px;top:761px;" width="19" height="18" viewBox="0 0 19 18"><path d="M4.800 9.400 V3 Q5.600 1.800 6.600 3 V7.400 L7.200 1.400 Q8.200 0.200 9.200 1.400 L9.400 7.200 L10.600 2.200 Q11.800 1.200 12.600 2.600 L11.800 8 L13.400 4.800 Q14.600 4.200 15 5.600 L13.200 11.600 Q12.400 15.600 8.800 15.600 Q5.600 15.600 3.800 12.600 L0.800 8.600 Q1.400 7 3 7.800 Z" fill="#b9b9b9"/><g transform="translate(15.600 14)"><path d="M0 3 L3 3 L3 0 Z" fill="#b9b9b9"/></g></svg>
<svg style="left:17.5px;top:793.5px;" width="18" height="17" viewBox="0 0 18 17"><path d="M0.400 0.400 H13 V3.600 H12 Q11.800 1.800 10 1.800 H7.800 V12.400 Q7.800 13.600 9.600 13.600 V14.600 H3.800 V13.600 Q5.600 13.600 5.600 12.400 V1.800 H3.400 Q1.600 1.800 1.400 3.600 H0.400 Z" fill="#b9b9b9"/><g transform="translate(14.400 13.600)"><path d="M0 3 L3 3 L3 0 Z" fill="#b9b9b9"/></g></svg>
<div style="left:54px;top:517px;width:1232px;height:458px;background:#1e1e1e;"></div>
<span id="t82" style="left:81px;top:521.0px;font-size:12px;line-height:16px;color:#b4b4b4;transform:scaleX(0.8685);transform-origin:0 50%;">AFFICHE - LUNA WAVE</span>
<svg style="left:235px;top:527px;" width="5.5" height="5.5" viewBox="0 0 5.5 5.5"><path d="M0.500 0.500 L5 5 M5 0.500 L0.500 5" stroke="#8a8a8a" stroke-width="1.100"/></svg>
<span id="t83" style="left:251px;top:521.0px;font-size:12px;line-height:16px;color:#e4e4e4;transform:scaleX(0.8625);transform-origin:0 50%;">AFFICHE - MORNING GLOW</span>
<svg style="left:398.5px;top:525px;" width="9" height="9" viewBox="0 0 9 9"><path d="M0 1h9M0 4.5h9M0 8h9" stroke="#d8d8d8" stroke-width="1.1"/></svg>
<div style="left:235px;top:540px;width:172.5px;height:1.5px;background:#dcdcdc;"></div>
<span id="t84" style="left:445px;top:521.0px;font-size:12px;line-height:16px;color:#b4b4b4;transform:scaleX(0.8392);transform-origin:0 50%;">AFFICHE - TERRA GLOW</span>
<span id="t85" style="left:72px;top:546.0px;font-size:14.5px;line-height:18px;color:#3f95f5;font-weight:700;transform:scaleX(0.9684);transform-origin:0 50%;">00:00:07:21</span>
<div style="left:67px;top:569px;width:24px;height:24px;background:#484848;border-radius:4px;"></div>
<div style="left:99px;top:569px;width:24px;height:24px;background:#484848;border-radius:4px;"></div>
<div style="left:131px;top:569px;width:24px;height:24px;background:#484848;border-radius:4px;"></div>
<svg style="left:72px;top:574px;" width="14" height="14" viewBox="0 0 14 14"><path d="M7 1.600 V13.600" stroke="#e0e0e0" stroke-width="1"/><rect x="5.700" y="0" width="2.600" height="2.400" fill="#e0e0e0"/><path d="M2.400 4.800 H5.600 M0.200 7.800 H5.600 M2.400 10.800 H5.600 M8.400 4.800 H12 M8.400 7.800 H13.800 M8.400 10.800 H13" stroke="#e0e0e0" stroke-width="1.700"/></svg>
<svg style="left:105.5px;top:575px;" width="11" height="11" viewBox="0 0 11 11"><path d="M1.600 10.200 V5.400 A3.900 3.900 0 0 1 9.400 5.400 V10.200" fill="none" stroke="#e0e0e0" stroke-width="2.600"/><path d="M0.300 8.400 H2.900 M8.100 8.400 H10.700" stroke="#8a8a8a" stroke-width="1.800"/></svg>
<svg style="left:136px;top:574.5px;" width="15" height="13" viewBox="0 0 15 13"><rect x="0.300" y="0.300" width="3.800" height="4" fill="#e0e0e0"/><path d="M4 6.600 H0.800 V10.600 H4" fill="none" stroke="#e0e0e0" stroke-width="1"/><path d="M5.600 0.300 H14.300 V9 L8.600 9.600 L5.600 12.800 Z" fill="#e0e0e0"/><path d="M6.900 0.700 L14.300 8.300" stroke="#484848" stroke-width="1.100"/></svg>
<svg style="left:170.5px;top:577px;" width="9" height="9.5" viewBox="0 0 9 9.5"><path d="M0.300 0.600 Q0.300 0 0.900 0 H7.700 Q8.300 0 8.300 0.600 V5.800 L4.300 9.200 L0.300 5.800 Z" fill="#b9b9b9"/></svg>
<svg style="left:200px;top:574px;" width="14.5" height="14.5" viewBox="0 0 14.5 14.5"><g transform="scale(1.0357142857142858)"><path d="M4.600 0.500 A4 4 0 0 0 0.900 5.900 A4 4 0 0 0 6 7.600 L11.200 13.200 A1.500 1.500 0 0 0 13.400 11.200 L7.700 5.900 A4 4 0 0 0 6.700 1.100 L4.400 3.400 L5 5 L3.400 4.600 L2.500 2.900 Z" fill="#b9b9b9" stroke="#b9b9b9" stroke-width="0.700" stroke-linejoin="round"/></g></svg>
<svg style="left:231px;top:576px;" width="16.5" height="10.5" viewBox="0 0 16.5 10.5"><rect x="0" y="0" width="16.500" height="10.500" rx="2.200" fill="#5a5a5a"/><path d="M7 3.400 Q4.800 2 3.400 3.800 Q2.400 5.400 3.400 6.900 Q4.800 8.400 7 7.200 M13.400 3.400 Q11.200 2 9.800 3.800 Q8.800 5.400 9.800 6.900 Q11.200 8.400 13.400 7.200" fill="none" stroke="#1e1e1e" stroke-width="1.500"/></svg>
<div style="left:67px;top:600px;width:191px;height:1px;background:#323232;"></div>
<div style="left:258px;top:600px;width:1px;height:350px;background:#383838;"></div>
<div style="left:262px;top:557px;width:1px;height:41px;background:#8f8f8f;"></div>
<svg style="left:259px;top:586px;" width="1000" height="13" viewBox="0 0 1000 13"><path d="M0.50 1 V12.400" stroke="#9a9a9a" stroke-width="1.1"/><path d="M6.37 7 V12.400" stroke="#9a9a9a" stroke-width="0.9"/><path d="M12.23 7 V12.400" stroke="#9a9a9a" stroke-width="0.9"/><path d="M18.10 7 V12.400" stroke="#9a9a9a" stroke-width="0.9"/><path d="M23.97 7 V12.400" stroke="#9a9a9a" stroke-width="0.9"/><path d="M29.83 7 V12.400" stroke="#9a9a9a" stroke-width="0.9"/><path d="M35.70 7 V12.400" stroke="#9a9a9a" stroke-width="0.9"/><path d="M41.57 7 V12.400" stroke="#9a9a9a" stroke-width="0.9"/><path d="M47.43 7 V12.400" stroke="#9a9a9a" stroke-width="0.9"/><path d="M53.30 7 V12.400" stroke="#9a9a9a" stroke-width="0.9"/><path d="M59.17 7 V12.400" stroke="#9a9a9a" stroke-width="0.9"/><path d="M65.03 7 V12.400" stroke="#9a9a9a" stroke-width="0.9"/><path d="M70.90 7 V12.400" stroke="#9a9a9a" stroke-width="0.9"/><path d="M76.77 7 V12.400" stroke="#9a9a9a" stroke-width="0.9"/><path d="M82.63 7 V12.400" stroke="#9a9a9a" stroke-width="0.9"/><path d="M88.50 1 V12.400" stroke="#9a9a9a" stroke-width="1.1"/><path d="M94.37 7 V12.400" stroke="#9a9a9a" stroke-width="0.9"/><path d="M100.23 7 V12.400" stroke="#9a9a9a" stroke-width="0.9"/><path d="M106.10 7 V12.400" stroke="#9a9a9a" stroke-width="0.9"/><path d="M111.97 7 V12.400" stroke="#9a9a9a" stroke-width="0.9"/><path d="M117.83 7 V12.400" stroke="#9a9a9a" stroke-width="0.9"/><path d="M123.70 7 V12.400" stroke="#9a9a9a" stroke-width="0.9"/><path d="M129.57 7 V12.400" stroke="#9a9a9a" stroke-width="0.9"/><path d="M135.43 7 V12.400" stroke="#9a9a9a" stroke-width="0.9"/><path d="M141.30 7 V12.400" stroke="#9a9a9a" stroke-width="0.9"/><path d="M147.17 7 V12.400" stroke="#9a9a9a" stroke-width="0.9"/><path d="M153.03 7 V12.400" stroke="#9a9a9a" stroke-width="0.9"/><path d="M158.90 7 V12.400" stroke="#9a9a9a" stroke-width="0.9"/><path d="M164.77 7 V12.400" stroke="#9a9a9a" stroke-width="0.9"/><path d="M170.63 7 V12.400" stroke="#9a9a9a" stroke-width="0.9"/><path d="M176.50 1 V12.400" stroke="#9a9a9a" stroke-width="1.1"/><path d="M182.37 7 V12.400" stroke="#9a9a9a" stroke-width="0.9"/><path d="M188.23 7 V12.400" stroke="#9a9a9a" stroke-width="0.9"/><path d="M194.10 7 V12.400" stroke="#9a9a9a" stroke-width="0.9"/><path d="M199.97 7 V12.400" stroke="#9a9a9a" stroke-width="0.9"/><path d="M205.83 7 V12.400" stroke="#9a9a9a" stroke-width="0.9"/><path d="M211.70 7 V12.400" stroke="#9a9a9a" stroke-width="0.9"/><path d="M217.57 7 V12.400" stroke="#9a9a9a" stroke-width="0.9"/><path d="M223.43 7 V12.400" stroke="#9a9a9a" stroke-width="0.9"/><path d="M229.30 7 V12.400" stroke="#9a9a9a" stroke-width="0.9"/><path d="M235.17 7 V12.400" stroke="#9a9a9a" stroke-width="0.9"/><path d="M241.03 7 V12.400" stroke="#9a9a9a" stroke-width="0.9"/><path d="M246.90 7 V12.400" stroke="#9a9a9a" stroke-width="0.9"/><path d="M252.77 7 V12.400" stroke="#9a9a9a" stroke-width="0.9"/><path d="M258.63 7 V12.400" stroke="#9a9a9a" stroke-width="0.9"/><path d="M264.50 1 V12.400" stroke="#9a9a9a" stroke-width="1.1"/><path d="M270.37 7 V12.400" stroke="#9a9a9a" stroke-width="0.9"/><path d="M276.23 7 V12.400" stroke="#9a9a9a" stroke-width="0.9"/><path d="M282.10 7 V12.400" stroke="#9a9a9a" stroke-width="0.9"/><path d="M287.97 7 V12.400" stroke="#9a9a9a" stroke-width="0.9"/><path d="M293.83 7 V12.400" stroke="#9a9a9a" stroke-width="0.9"/><path d="M299.70 7 V12.400" stroke="#9a9a9a" stroke-width="0.9"/><path d="M305.57 7 V12.400" stroke="#9a9a9a" stroke-width="0.9"/><path d="M311.43 7 V12.400" stroke="#9a9a9a" stroke-width="0.9"/><path d="M317.30 7 V12.400" stroke="#9a9a9a" stroke-width="0.9"/><path d="M323.17 7 V12.400" stroke="#9a9a9a" stroke-width="0.9"/><path d="M329.03 7 V12.400" stroke="#9a9a9a" stroke-width="0.9"/><path d="M334.90 7 V12.400" stroke="#9a9a9a" stroke-width="0.9"/><path d="M340.77 7 V12.400" stroke="#9a9a9a" stroke-width="0.9"/><path d="M346.63 7 V12.400" stroke="#9a9a9a" stroke-width="0.9"/><path d="M352.50 1 V12.400" stroke="#9a9a9a" stroke-width="1.1"/><path d="M358.37 7 V12.400" stroke="#9a9a9a" stroke-width="0.9"/><path d="M364.23 7 V12.400" stroke="#9a9a9a" stroke-width="0.9"/><path d="M370.10 7 V12.400" stroke="#9a9a9a" stroke-width="0.9"/><path d="M375.97 7 V12.400" stroke="#9a9a9a" stroke-width="0.9"/><path d="M381.83 7 V12.400" stroke="#9a9a9a" stroke-width="0.9"/><path d="M387.70 7 V12.400" stroke="#9a9a9a" stroke-width="0.9"/><path d="M393.57 7 V12.400" stroke="#9a9a9a" stroke-width="0.9"/><path d="M399.43 7 V12.400" stroke="#9a9a9a" stroke-width="0.9"/><path d="M405.30 7 V12.400" stroke="#9a9a9a" stroke-width="0.9"/><path d="M411.17 7 V12.400" stroke="#9a9a9a" stroke-width="0.9"/><path d="M417.03 7 V12.400" stroke="#9a9a9a" stroke-width="0.9"/><path d="M422.90 7 V12.400" stroke="#9a9a9a" stroke-width="0.9"/><path d="M428.77 7 V12.400" stroke="#9a9a9a" stroke-width="0.9"/><path d="M434.63 7 V12.400" stroke="#9a9a9a" stroke-width="0.9"/><path d="M440.50 1 V12.400" stroke="#9a9a9a" stroke-width="1.1"/><path d="M446.37 7 V12.400" stroke="#9a9a9a" stroke-width="0.9"/><path d="M452.23 7 V12.400" stroke="#9a9a9a" stroke-width="0.9"/><path d="M458.10 7 V12.400" stroke="#9a9a9a" stroke-width="0.9"/><path d="M463.97 7 V12.400" stroke="#9a9a9a" stroke-width="0.9"/><path d="M469.83 7 V12.400" stroke="#9a9a9a" stroke-width="0.9"/><path d="M475.70 7 V12.400" stroke="#9a9a9a" stroke-width="0.9"/><path d="M481.57 7 V12.400" stroke="#9a9a9a" stroke-width="0.9"/><path d="M487.43 7 V12.400" stroke="#9a9a9a" stroke-width="0.9"/><path d="M493.30 7 V12.400" stroke="#9a9a9a" stroke-width="0.9"/><path d="M499.17 7 V12.400" stroke="#9a9a9a" stroke-width="0.9"/><path d="M505.03 7 V12.400" stroke="#9a9a9a" stroke-width="0.9"/><path d="M510.90 7 V12.400" stroke="#9a9a9a" stroke-width="0.9"/><path d="M516.77 7 V12.400" stroke="#9a9a9a" stroke-width="0.9"/><path d="M522.63 7 V12.400" stroke="#9a9a9a" stroke-width="0.9"/><path d="M528.50 1 V12.400" stroke="#9a9a9a" stroke-width="1.1"/><path d="M534.37 7 V12.400" stroke="#9a9a9a" stroke-width="0.9"/><path d="M540.23 7 V12.400" stroke="#9a9a9a" stroke-width="0.9"/><path d="M546.10 7 V12.400" stroke="#9a9a9a" stroke-width="0.9"/><path d="M551.97 7 V12.400" stroke="#9a9a9a" stroke-width="0.9"/><path d="M557.83 7 V12.400" stroke="#9a9a9a" stroke-width="0.9"/><path d="M563.70 7 V12.400" stroke="#9a9a9a" stroke-width="0.9"/><path d="M569.57 7 V12.400" stroke="#9a9a9a" stroke-width="0.9"/><path d="M575.43 7 V12.400" stroke="#9a9a9a" stroke-width="0.9"/><path d="M581.30 7 V12.400" stroke="#9a9a9a" stroke-width="0.9"/><path d="M587.17 7 V12.400" stroke="#9a9a9a" stroke-width="0.9"/><path d="M593.03 7 V12.400" stroke="#9a9a9a" stroke-width="0.9"/><path d="M598.90 7 V12.400" stroke="#9a9a9a" stroke-width="0.9"/><path d="M604.77 7 V12.400" stroke="#9a9a9a" stroke-width="0.9"/><path d="M610.63 7 V12.400" stroke="#9a9a9a" stroke-width="0.9"/><path d="M616.50 1 V12.400" stroke="#9a9a9a" stroke-width="1.1"/><path d="M622.37 7 V12.400" stroke="#9a9a9a" stroke-width="0.9"/><path d="M628.23 7 V12.400" stroke="#9a9a9a" stroke-width="0.9"/><path d="M634.10 7 V12.400" stroke="#9a9a9a" stroke-width="0.9"/><path d="M639.97 7 V12.400" stroke="#9a9a9a" stroke-width="0.9"/><path d="M645.83 7 V12.400" stroke="#9a9a9a" stroke-width="0.9"/><path d="M651.70 7 V12.400" stroke="#9a9a9a" stroke-width="0.9"/><path d="M657.57 7 V12.400" stroke="#9a9a9a" stroke-width="0.9"/><path d="M663.43 7 V12.400" stroke="#9a9a9a" stroke-width="0.9"/><path d="M669.30 7 V12.400" stroke="#9a9a9a" stroke-width="0.9"/><path d="M675.17 7 V12.400" stroke="#9a9a9a" stroke-width="0.9"/><path d="M681.03 7 V12.400" stroke="#9a9a9a" stroke-width="0.9"/><path d="M686.90 7 V12.400" stroke="#9a9a9a" stroke-width="0.9"/><path d="M692.77 7 V12.400" stroke="#9a9a9a" stroke-width="0.9"/><path d="M698.63 7 V12.400" stroke="#9a9a9a" stroke-width="0.9"/><path d="M704.50 1 V12.400" stroke="#9a9a9a" stroke-width="1.1"/><path d="M710.37 7 V12.400" stroke="#9a9a9a" stroke-width="0.9"/><path d="M716.23 7 V12.400" stroke="#9a9a9a" stroke-width="0.9"/><path d="M722.10 7 V12.400" stroke="#9a9a9a" stroke-width="0.9"/><path d="M727.97 7 V12.400" stroke="#9a9a9a" stroke-width="0.9"/><path d="M733.83 7 V12.400" stroke="#9a9a9a" stroke-width="0.9"/><path d="M739.70 7 V12.400" stroke="#9a9a9a" stroke-width="0.9"/><path d="M745.57 7 V12.400" stroke="#9a9a9a" stroke-width="0.9"/><path d="M751.43 7 V12.400" stroke="#9a9a9a" stroke-width="0.9"/><path d="M757.30 7 V12.400" stroke="#9a9a9a" stroke-width="0.9"/><path d="M763.17 7 V12.400" stroke="#9a9a9a" stroke-width="0.9"/><path d="M769.03 7 V12.400" stroke="#9a9a9a" stroke-width="0.9"/><path d="M774.90 7 V12.400" stroke="#9a9a9a" stroke-width="0.9"/><path d="M780.77 7 V12.400" stroke="#9a9a9a" stroke-width="0.9"/><path d="M786.63 7 V12.400" stroke="#9a9a9a" stroke-width="0.9"/><path d="M792.50 1 V12.400" stroke="#9a9a9a" stroke-width="1.1"/><path d="M798.37 7 V12.400" stroke="#9a9a9a" stroke-width="0.9"/><path d="M804.23 7 V12.400" stroke="#9a9a9a" stroke-width="0.9"/><path d="M810.10 7 V12.400" stroke="#9a9a9a" stroke-width="0.9"/><path d="M815.97 7 V12.400" stroke="#9a9a9a" stroke-width="0.9"/><path d="M821.83 7 V12.400" stroke="#9a9a9a" stroke-width="0.9"/><path d="M827.70 7 V12.400" stroke="#9a9a9a" stroke-width="0.9"/><path d="M833.57 7 V12.400" stroke="#9a9a9a" stroke-width="0.9"/><path d="M839.43 7 V12.400" stroke="#9a9a9a" stroke-width="0.9"/><path d="M845.30 7 V12.400" stroke="#9a9a9a" stroke-width="0.9"/><path d="M851.17 7 V12.400" stroke="#9a9a9a" stroke-width="0.9"/><path d="M857.03 7 V12.400" stroke="#9a9a9a" stroke-width="0.9"/><path d="M862.90 7 V12.400" stroke="#9a9a9a" stroke-width="0.9"/><path d="M868.77 7 V12.400" stroke="#9a9a9a" stroke-width="0.9"/><path d="M874.63 7 V12.400" stroke="#9a9a9a" stroke-width="0.9"/><path d="M880.50 1 V12.400" stroke="#9a9a9a" stroke-width="1.1"/><path d="M886.37 7 V12.400" stroke="#9a9a9a" stroke-width="0.9"/><path d="M892.23 7 V12.400" stroke="#9a9a9a" stroke-width="0.9"/><path d="M898.10 7 V12.400" stroke="#9a9a9a" stroke-width="0.9"/><path d="M903.97 7 V12.400" stroke="#9a9a9a" stroke-width="0.9"/><path d="M909.83 7 V12.400" stroke="#9a9a9a" stroke-width="0.9"/><path d="M915.70 7 V12.400" stroke="#9a9a9a" stroke-width="0.9"/><path d="M921.57 7 V12.400" stroke="#9a9a9a" stroke-width="0.9"/><path d="M927.43 7 V12.400" stroke="#9a9a9a" stroke-width="0.9"/><path d="M933.30 7 V12.400" stroke="#9a9a9a" stroke-width="0.9"/><path d="M939.17 7 V12.400" stroke="#9a9a9a" stroke-width="0.9"/><path d="M945.03 7 V12.400" stroke="#9a9a9a" stroke-width="0.9"/><path d="M950.90 7 V12.400" stroke="#9a9a9a" stroke-width="0.9"/><path d="M956.77 7 V12.400" stroke="#9a9a9a" stroke-width="0.9"/><path d="M962.63 7 V12.400" stroke="#9a9a9a" stroke-width="0.9"/><path d="M968.50 1 V12.400" stroke="#9a9a9a" stroke-width="1.1"/><path d="M974.37 7 V12.400" stroke="#9a9a9a" stroke-width="0.9"/><path d="M980.23 7 V12.400" stroke="#9a9a9a" stroke-width="0.9"/><path d="M986.10 7 V12.400" stroke="#9a9a9a" stroke-width="0.9"/><path d="M991.97 7 V12.400" stroke="#9a9a9a" stroke-width="0.9"/><path d="M997.83 7 V12.400" stroke="#9a9a9a" stroke-width="0.9"/></svg>
<div style="left:259.5px;top:573.5px;width:1000px;height:14px;background:transparent;overflow:hidden;"><span style="position:absolute;left:-27.0px;top:0;font-size:11px;line-height:14px;color:#b0b0b0;letter-spacing:-0.21px">00:00:00:00</span><span style="position:absolute;left:61.0px;top:0;font-size:11px;line-height:14px;color:#b0b0b0;letter-spacing:-0.21px">00:00:01:00</span><span style="position:absolute;left:149.0px;top:0;font-size:11px;line-height:14px;color:#b0b0b0;letter-spacing:-0.21px">00:00:02:00</span><span style="position:absolute;left:237.0px;top:0;font-size:11px;line-height:14px;color:#b0b0b0;letter-spacing:-0.21px">00:00:03:00</span><span style="position:absolute;left:325.0px;top:0;font-size:11px;line-height:14px;color:#b0b0b0;letter-spacing:-0.21px">00:00:04:00</span><span style="position:absolute;left:413.0px;top:0;font-size:11px;line-height:14px;color:#b0b0b0;letter-spacing:-0.21px">00:00:05:00</span><span style="position:absolute;left:501.0px;top:0;font-size:11px;line-height:14px;color:#b0b0b0;letter-spacing:-0.21px">00:00:06:00</span><span style="position:absolute;left:589.0px;top:0;font-size:11px;line-height:14px;color:#b0b0b0;letter-spacing:-0.21px">00:00:07:00</span><span style="position:absolute;left:677.0px;top:0;font-size:11px;line-height:14px;color:#b0b0b0;letter-spacing:-0.21px">00:00:08:00</span><span style="position:absolute;left:765.0px;top:0;font-size:11px;line-height:14px;color:#b0b0b0;letter-spacing:-0.21px">00:00:09:00</span><span style="position:absolute;left:853.0px;top:0;font-size:11px;line-height:14px;color:#b0b0b0;letter-spacing:-0.21px">00:00:10:00</span><span style="position:absolute;left:941.0px;top:0;font-size:11px;line-height:14px;color:#b0b0b0;letter-spacing:-0.21px">00:00:11:00</span></div>
<div style="left:259px;top:598.5px;width:704.5px;height:2.7px;background:#f3ea00;"></div>
<div style="left:54px;top:650px;width:1208px;height:1px;background:#353535;"></div>
<div style="left:54px;top:691px;width:1208px;height:1px;background:#353535;"></div>
<div style="left:54px;top:732px;width:1208px;height:1px;background:#353535;"></div>
<div style="left:54px;top:818px;width:1208px;height:1px;background:#353535;"></div>
<div style="left:54px;top:859px;width:1208px;height:1px;background:#353535;"></div>
<div style="left:54px;top:900px;width:1208px;height:1px;background:#353535;"></div>
<div style="left:54px;top:941px;width:1208px;height:1px;background:#353535;"></div>
<div style="left:54px;top:773px;width:1220px;height:5px;background:#323232;"></div>
<svg style="left:98px;top:664.0px;" width="11" height="13" viewBox="0 0 11 13"><path d="M2.200 6 V3.600 A2.700 2.700 0 0 1 7.600 3.200" fill="none" stroke="#b9b9b9" stroke-width="1.500"/><rect x="0.400" y="5.800" width="10" height="6.800" rx="0.800" fill="#b9b9b9"/><rect x="4.600" y="8" width="1.800" height="3" fill="#1e1e1e"/></svg>
<span id="t86" style="left:121px;top:663.0px;font-size:12px;line-height:16px;color:#c4c4c4;transform:scaleX(0.8511);transform-origin:0 50%;">V3</span>
<svg style="left:144.5px;top:657.2px;" width="13" height="10" viewBox="0 0 13 10"><rect x="0.600" y="0.600" width="9.200" height="3.200" fill="none" stroke="#b9b9b9" stroke-width="1.100"/><rect x="0.600" y="6" width="9.200" height="3.200" fill="none" stroke="#b9b9b9" stroke-width="1.100"/><path d="M9.800 2.200 H12.200 V7.600 H9.800" fill="none" stroke="#b9b9b9" stroke-width="1.100"/></svg>
<svg style="left:167.5px;top:659.0px;" width="14" height="9" viewBox="0 0 14 9"><path d="M0.400 4.500 Q7 -3.400 13.600 4.500 Q7 12.400 0.400 4.500 Z" fill="none" stroke="#b9b9b9" stroke-width="1.300"/><circle cx="7" cy="4.300" r="2.500" fill="#b9b9b9"/></svg>
<svg style="left:98px;top:705.0px;" width="11" height="13" viewBox="0 0 11 13"><path d="M2.200 6 V3.600 A2.700 2.700 0 0 1 7.600 3.200" fill="none" stroke="#b9b9b9" stroke-width="1.500"/><rect x="0.400" y="5.800" width="10" height="6.800" rx="0.800" fill="#b9b9b9"/><rect x="4.600" y="8" width="1.800" height="3" fill="#1e1e1e"/></svg>
<span id="t87" style="left:121px;top:704.0px;font-size:12px;line-height:16px;color:#c4c4c4;transform:scaleX(0.8511);transform-origin:0 50%;">V2</span>
<svg style="left:144.5px;top:698.2px;" width="13" height="10" viewBox="0 0 13 10"><rect x="0.600" y="0.600" width="9.200" height="3.200" fill="none" stroke="#b9b9b9" stroke-width="1.100"/><rect x="0.600" y="6" width="9.200" height="3.200" fill="none" stroke="#b9b9b9" stroke-width="1.100"/><path d="M9.800 2.200 H12.200 V7.600 H9.800" fill="none" stroke="#b9b9b9" stroke-width="1.100"/></svg>
<svg style="left:167.5px;top:700.0px;" width="14" height="9" viewBox="0 0 14 9"><path d="M0.400 4.500 Q7 -3.400 13.600 4.500 Q7 12.400 0.400 4.500 Z" fill="none" stroke="#b9b9b9" stroke-width="1.300"/><circle cx="7" cy="4.300" r="2.500" fill="#b9b9b9"/></svg>
<svg style="left:98px;top:746.0px;" width="11" height="13" viewBox="0 0 11 13"><path d="M2.200 6 V3.600 A2.700 2.700 0 0 1 7.600 3.200" fill="none" stroke="#b9b9b9" stroke-width="1.500"/><rect x="0.400" y="5.800" width="10" height="6.800" rx="0.800" fill="#b9b9b9"/><rect x="4.600" y="8" width="1.800" height="3" fill="#1e1e1e"/></svg>
<div style="left:115px;top:733.0px;width:24px;height:40px;background:#0a5dd0;border-radius:5px;"></div>
<span id="t88" style="left:121px;top:745.0px;font-size:12px;line-height:16px;color:#ffffff;transform:scaleX(0.8511);transform-origin:0 50%;">V1</span>
<svg style="left:144.5px;top:739.2px;" width="13" height="10" viewBox="0 0 13 10"><rect x="0.600" y="0.600" width="9.200" height="3.200" fill="none" stroke="#b9b9b9" stroke-width="1.100"/><rect x="0.600" y="6" width="9.200" height="3.200" fill="none" stroke="#b9b9b9" stroke-width="1.100"/><path d="M9.800 2.200 H12.200 V7.600 H9.800" fill="none" stroke="#b9b9b9" stroke-width="1.100"/></svg>
<svg style="left:167.5px;top:741.0px;" width="14" height="9" viewBox="0 0 14 9"><path d="M0.400 4.500 Q7 -3.400 13.600 4.500 Q7 12.400 0.400 4.500 Z" fill="none" stroke="#b9b9b9" stroke-width="1.300"/><circle cx="7" cy="4.300" r="2.500" fill="#b9b9b9"/></svg>
<svg style="left:98px;top:791.5px;" width="11" height="13" viewBox="0 0 11 13"><path d="M2.200 6 V3.600 A2.700 2.700 0 0 1 7.600 3.200" fill="none" stroke="#b9b9b9" stroke-width="1.500"/><rect x="0.400" y="5.800" width="10" height="6.800" rx="0.800" fill="#b9b9b9"/><rect x="4.600" y="8" width="1.800" height="3" fill="#1e1e1e"/></svg>
<div style="left:115px;top:778px;width:24px;height:39.3px;background:#0a5dd0;border-radius:5px;"></div>
<span id="t89" style="left:121px;top:790.5px;font-size:12px;line-height:16px;color:#ffffff;font-weight:700;transform:scaleX(0.8147);transform-origin:0 50%;">A1</span>
<svg style="left:144.5px;top:785px;" width="13" height="10" viewBox="0 0 13 10"><rect x="0.600" y="0.600" width="9.200" height="3.200" fill="none" stroke="#b9b9b9" stroke-width="1.100"/><rect x="0.600" y="6" width="9.200" height="3.200" fill="none" stroke="#b9b9b9" stroke-width="1.100"/><path d="M9.800 2.200 H12.200 V7.600 H9.800" fill="none" stroke="#b9b9b9" stroke-width="1.100"/></svg>
<span id="t90" style="left:172px;top:782.3px;font-size:10px;line-height:16px;color:#b9b9b9;transform:scaleX(0.9588);transform-origin:0 50%;">M</span>
<span id="t91" style="left:197.5px;top:782.3px;font-size:10px;line-height:16px;color:#b9b9b9;transform:scaleX(0.8244);transform-origin:0 50%;">S</span>
<svg style="left:218px;top:782.6px;" width="10" height="15" viewBox="0 0 10 15"><rect x="2.800" y="0.200" width="4.400" height="8.800" rx="2.200" fill="#b9b9b9"/><path d="M0.700 6 V7 A4.300 4.300 0 0 0 9.300 7 V6" fill="none" stroke="#b9b9b9" stroke-width="1.100"/><path d="M5 11.400 V13.600 M2.400 14.200 H7.600" stroke="#b9b9b9" stroke-width="1.100"/></svg>
<svg style="left:98px;top:832.7px;" width="11" height="13" viewBox="0 0 11 13"><path d="M2.200 6 V3.600 A2.700 2.700 0 0 1 7.600 3.200" fill="none" stroke="#b9b9b9" stroke-width="1.500"/><rect x="0.400" y="5.800" width="10" height="6.800" rx="0.800" fill="#b9b9b9"/><rect x="4.600" y="8" width="1.800" height="3" fill="#1e1e1e"/></svg>
<div style="left:115px;top:819.2px;width:24px;height:39.3px;background:#0a5dd0;border-radius:5px;"></div>
<span id="t92" style="left:121px;top:831.7px;font-size:12px;line-height:16px;color:#ffffff;font-weight:700;transform:scaleX(0.8147);transform-origin:0 50%;">A2</span>
<svg style="left:144.5px;top:826.2px;" width="13" height="10" viewBox="0 0 13 10"><rect x="0.600" y="0.600" width="9.200" height="3.200" fill="none" stroke="#b9b9b9" stroke-width="1.100"/><rect x="0.600" y="6" width="9.200" height="3.200" fill="none" stroke="#b9b9b9" stroke-width="1.100"/><path d="M9.800 2.200 H12.200 V7.600 H9.800" fill="none" stroke="#b9b9b9" stroke-width="1.100"/></svg>
<span id="t93" style="left:172px;top:823.5px;font-size:10px;line-height:16px;color:#b9b9b9;transform:scaleX(0.9588);transform-origin:0 50%;">M</span>
<span id="t94" style="left:197.5px;top:823.5px;font-size:10px;line-height:16px;color:#b9b9b9;transform:scaleX(0.8244);transform-origin:0 50%;">S</span>
<svg style="left:218px;top:823.8000000000001px;" width="10" height="15" viewBox="0 0 10 15"><rect x="2.800" y="0.200" width="4.400" height="8.800" rx="2.200" fill="#b9b9b9"/><path d="M0.700 6 V7 A4.300 4.300 0 0 0 9.300 7 V6" fill="none" stroke="#b9b9b9" stroke-width="1.100"/><path d="M5 11.400 V13.600 M2.400 14.200 H7.600" stroke="#b9b9b9" stroke-width="1.100"/></svg>
<svg style="left:98px;top:873.7px;" width="11" height="13" viewBox="0 0 11 13"><path d="M2.200 6 V3.600 A2.700 2.700 0 0 1 7.600 3.200" fill="none" stroke="#b9b9b9" stroke-width="1.500"/><rect x="0.400" y="5.800" width="10" height="6.800" rx="0.800" fill="#b9b9b9"/><rect x="4.600" y="8" width="1.800" height="3" fill="#1e1e1e"/></svg>
<div style="left:115px;top:860.2px;width:24px;height:39.3px;background:#0a5dd0;border-radius:5px;"></div>
<span id="t95" style="left:121px;top:872.7px;font-size:12px;line-height:16px;color:#ffffff;font-weight:700;transform:scaleX(0.8147);transform-origin:0 50%;">A3</span>
<svg style="left:144.5px;top:867.2px;" width="13" height="10" viewBox="0 0 13 10"><rect x="0.600" y="0.600" width="9.200" height="3.200" fill="none" stroke="#b9b9b9" stroke-width="1.100"/><rect x="0.600" y="6" width="9.200" height="3.200" fill="none" stroke="#b9b9b9" stroke-width="1.100"/><path d="M9.800 2.200 H12.200 V7.600 H9.800" fill="none" stroke="#b9b9b9" stroke-width="1.100"/></svg>
<span id="t96" style="left:172px;top:864.5px;font-size:10px;line-height:16px;color:#b9b9b9;transform:scaleX(0.9588);transform-origin:0 50%;">M</span>
<span id="t97" style="left:197.5px;top:864.5px;font-size:10px;line-height:16px;color:#b9b9b9;transform:scaleX(0.8244);transform-origin:0 50%;">S</span>
<svg style="left:218px;top:864.8000000000001px;" width="10" height="15" viewBox="0 0 10 15"><rect x="2.800" y="0.200" width="4.400" height="8.800" rx="2.200" fill="#b9b9b9"/><path d="M0.700 6 V7 A4.300 4.300 0 0 0 9.300 7 V6" fill="none" stroke="#b9b9b9" stroke-width="1.100"/><path d="M5 11.400 V13.600 M2.400 14.200 H7.600" stroke="#b9b9b9" stroke-width="1.100"/></svg>
<span id="t98" style="left:73px;top:790.5px;font-size:12px;line-height:16px;color:#c4c4c4;transform:scaleX(0.8511);transform-origin:0 50%;">A1</span>
<svg style="left:98px;top:914.5px;" width="11" height="13" viewBox="0 0 11 13"><path d="M2.200 6 V3.600 A2.700 2.700 0 0 1 7.600 3.200" fill="none" stroke="#b9b9b9" stroke-width="1.500"/><rect x="0.400" y="5.800" width="10" height="6.800" rx="0.800" fill="#b9b9b9"/><rect x="4.600" y="8" width="1.800" height="3" fill="#1e1e1e"/></svg>
<span id="t99" style="left:119.5px;top:913.0px;font-size:12px;line-height:16px;color:#c4c4c4;transform:scaleX(0.9047);transform-origin:0 50%;">Mixage</span>
<span id="t100" style="left:179.5px;top:906.5px;font-size:12px;line-height:16px;color:#3f95f5;transform:scaleX(0.8689);transform-origin:0 50%;">0,0</span>
<svg style="left:241px;top:908.5px;" width="11.5" height="10" viewBox="0 0 11.5 10"><path d="M0.400 0.400 L5.400 5 L0.400 9.600 Z M11.100 0.400 L6.100 5 L11.100 9.600 Z" fill="#b9b9b9"/><path d="M5.750 2.600 V7.400" stroke="#b9b9b9" stroke-width="1"/></svg>
<div style="left:260px;top:912.3px;width:1000px;height:1.7px;background:#a4a4a4;"></div>
<div style="left:259px;top:733px;width:614.4px;height:39.7px;background:#024d6c;border-radius:2px 0 0 2px;"></div>
<div style="left:875.3px;top:733px;width:86.4px;height:39.7px;background:#024d6c;border-radius:0 2px 2px 0;"></div>
<span id="t101" style="left:267px;top:733.0px;font-size:12px;line-height:16px;color:#e8e8e8;transform:scaleX(0.8037);transform-origin:0 50%;">AFFICHE - MORNING GLOW.mp4</span>
<span id="t102" style="left:883px;top:733.0px;font-size:12px;line-height:16px;color:#e8e8e8;transform:scaleX(0.6946);transform-origin:0 50%;">AFFICHE…</span>
<span id="t103" style="left:855px;top:734.0px;font-size:12px;line-height:16px;color:#3d7e9c;font-style:italic;transform:scaleX(1.0167);transform-origin:0 50%;">fx</span>
<span id="t104" style="left:943px;top:734.0px;font-size:12px;line-height:16px;color:#3d7e9c;font-style:italic;transform:scaleX(1.0167);transform-origin:0 50%;">fx</span>
<svg style="left:259px;top:749px;" width="14" height="24" viewBox="0 0 14 24"><rect width="14" height="23.700" fill="#f4f4f2"/><circle cx="5" cy="8" r="2.600" fill="none" stroke="#555" stroke-width="0.700"/><circle cx="7.600" cy="11" r="2.400" fill="#e8a637"/><circle cx="6" cy="13" r="1.600" fill="#efe6da"/><circle cx="9" cy="15" r="1" fill="#eab84e"/><circle cx="4" cy="18" r="0.600" fill="#eab84e"/><path d="M4 3 H10" stroke="#f0d98c" stroke-width="1"/></svg>
<svg style="left:875.3px;top:749px;" width="14" height="24" viewBox="0 0 14 24"><defs><linearGradient id="th2" x1="0" y1="0.700" x2="1" y2="0.300"><stop offset="0" stop-color="#f4f0ec"/><stop offset="0.350" stop-color="#e8dccf"/><stop offset="0.650" stop-color="#e0a050"/><stop offset="1" stop-color="#d89a48"/></linearGradient></defs><rect width="14" height="23.700" fill="url(#th2)"/></svg>
<svg style="left:869.5px;top:733px;" width="10" height="4.5" viewBox="0 0 10 4.5"><path d="M0 0 H4 V4 Q0.400 3.600 0 0 Z M6 0 H10 Q9.600 3.600 6 4 Z" fill="#e8e8e8"/></svg>
<div style="left:259px;top:778px;width:614.4px;height:39.3px;background:#2d590c;border-radius:2px;"></div>
<div style="left:875.3px;top:778px;width:86.40000000000009px;height:39.3px;background:#2d590c;border-radius:2px;"></div>
<svg style="left:259px;top:778px;" width="703" height="40" viewBox="0 0 703 40"><polygon points="0.0,28.3 0.0,20.65 1.3,21.00 2.6,20.00 3.9,21.16 5.2,20.23 6.5,20.57 7.8,21.18 9.1,20.29 10.4,21.23 11.7,20.43 13.0,21.16 14.3,21.12 15.6,20.45 16.9,19.65 18.2,21.05 19.5,20.85 20.8,20.05 22.1,19.40 23.4,20.15 24.7,20.51 26.0,19.35 27.3,21.21 28.6,19.58 29.9,20.72 31.2,21.01 32.5,21.06 33.8,20.68 35.1,19.67 36.4,20.94 37.7,20.14 39.0,20.02 40.3,20.56 41.6,20.20 42.9,21.17 44.2,21.18 45.5,20.89 46.8,19.94 48.1,20.44 49.4,20.67 50.7,20.13 52.0,20.39 53.3,20.70 54.6,19.71 55.9,19.90 57.2,20.81 58.5,20.15 59.8,20.25 61.1,19.55 62.4,19.84 63.7,20.72 65.0,19.34 66.3,21.06 67.6,20.46 68.9,19.79 70.2,21.00 71.5,20.32 72.8,21.22 74.1,19.96 75.4,19.77 76.7,20.15 78.0,19.55 79.3,20.67 80.6,19.91 81.9,20.11 83.2,20.14 84.5,20.39 85.8,19.62 87.1,19.41 88.4,20.35 89.7,19.97 91.0,21.18 92.3,19.90 93.6,20.01 94.9,19.31 96.2,19.66 97.5,20.73 98.8,20.53 100.1,19.96 101.4,21.25 102.7,20.38 104.0,20.96 105.3,21.07 106.6,21.18 107.9,19.76 109.2,21.04 110.5,20.80 111.8,20.52 113.1,19.56 114.4,21.14 115.7,20.40 117.0,20.20 118.3,19.53 119.6,19.66 120.9,19.57 122.2,20.74 123.5,20.47 124.8,20.58 126.1,19.53 127.4,19.38 128.7,21.00 130.0,20.95 131.3,20.84 132.6,20.83 133.9,20.33 135.2,20.12 136.5,20.77 137.8,21.29 139.1,20.46 140.4,20.56 141.7,20.17 143.0,19.39 144.3,19.92 145.6,20.27 146.9,20.06 148.2,19.95 149.5,21.19 150.8,19.50 152.1,19.74 153.4,19.55 154.7,19.70 156.0,20.52 157.3,20.50 158.6,21.09 159.9,20.03 161.2,21.18 162.5,21.17 163.8,20.88 165.1,20.98 166.4,20.62 167.7,21.19 169.0,21.30 170.3,21.00 171.6,21.10 172.9,20.57 174.2,21.25 175.5,19.55 176.8,20.07 178.1,21.00 179.4,20.80 180.7,20.61 182.0,20.57 183.3,21.05 184.6,19.60 185.9,19.31 187.2,20.37 188.5,20.33 189.8,21.13 191.1,21.10 192.4,20.61 193.7,20.77 195.0,19.64 196.3,20.98 197.6,21.25 198.9,19.40 200.2,20.24 201.5,21.01 202.8,20.21 204.1,21.25 205.4,20.24 206.7,19.34 208.0,19.57 209.3,19.91 210.6,20.78 211.9,20.57 213.2,20.97 214.5,19.76 215.8,20.23 217.1,19.74 218.4,20.64 219.7,20.85 221.0,19.68 222.3,19.33 223.6,19.59 224.9,19.69 226.2,19.66 227.5,19.82 228.8,20.85 230.1,20.26 231.4,20.59 232.7,21.24 234.0,21.24 235.3,20.74 236.6,20.78 237.9,19.91 239.2,19.39 240.5,20.41 241.8,19.43 243.1,19.32 244.4,19.39 245.7,20.57 247.0,20.86 248.3,20.85 249.6,20.91 250.9,20.89 252.2,20.05 253.5,19.50 254.8,19.62 256.1,20.34 257.4,19.99 258.7,19.70 260.0,21.13 261.3,19.98 262.6,19.48 263.9,19.74 265.2,19.80 266.5,20.34 267.8,20.94 269.1,19.72 270.4,20.63 271.7,19.70 273.0,19.36 274.3,20.51 275.6,20.50 276.9,19.41 278.2,19.85 279.5,20.96 280.8,21.05 282.1,21.00 283.4,19.49 284.7,19.69 286.0,21.01 287.3,19.65 288.6,19.34 289.9,19.99 291.2,20.60 292.5,20.20 293.8,21.04 295.1,21.27 296.4,19.36 297.7,20.00 299.0,20.25 300.3,19.43 301.6,20.43 302.9,19.56 304.2,19.65 305.5,20.88 306.8,20.80 308.1,20.71 309.4,20.82 310.7,20.13 312.0,20.78 313.3,20.46 314.6,21.04 315.9,19.48 317.2,20.59 318.5,20.38 319.8,20.13 321.1,19.49 322.4,20.46 323.7,19.46 325.0,20.30 326.3,20.24 327.6,20.25 328.9,21.26 330.2,20.42 331.5,20.93 332.8,21.29 334.1,19.70 335.4,20.96 336.7,20.35 338.0,19.85 339.3,20.19 340.6,20.65 341.9,20.26 343.2,20.19 344.5,19.73 345.8,21.09 347.1,20.18 348.4,20.80 349.7,20.75 351.0,19.76 352.3,20.28 353.6,20.18 354.9,19.78 356.2,19.48 357.5,20.41 358.8,20.07 360.1,20.29 361.4,20.28 362.7,19.91 364.0,20.40 365.3,20.23 366.6,20.34 367.9,19.42 369.2,19.90 370.5,19.55 371.8,19.42 373.1,20.78 374.4,20.18 375.7,19.41 377.0,19.62 378.3,21.03 379.6,21.06 380.9,20.42 382.2,21.15 383.5,20.82 384.8,21.15 386.1,19.96 387.4,19.73 388.7,19.51 390.0,20.99 391.3,19.87 392.6,19.98 393.9,21.01 395.2,19.53 396.5,19.36 397.8,20.86 399.1,19.39 400.4,20.50 401.7,20.33 403.0,19.32 404.3,19.64 405.6,20.98 406.9,20.44 408.2,20.27 409.5,20.62 410.8,20.91 412.1,20.66 413.4,19.86 414.7,21.26 416.0,20.19 417.3,20.42 418.6,21.26 419.9,20.64 421.2,20.05 422.5,20.28 423.8,21.17 425.1,19.33 426.4,19.72 427.7,19.36 429.0,21.09 430.3,20.77 431.6,21.22 432.9,19.74 434.2,20.76 435.5,21.04 436.8,20.46 438.1,19.48 439.4,19.66 440.7,20.78 442.0,21.00 443.3,19.46 444.6,20.16 445.9,19.90 447.2,21.12 448.5,21.18 449.8,19.92 451.1,20.45 452.4,21.16 453.7,19.42 455.0,20.03 456.3,19.70 457.6,21.13 458.9,19.59 460.2,21.17 461.5,19.57 462.8,20.39 464.1,20.62 465.4,20.19 466.7,19.45 468.0,20.76 469.3,21.04 470.6,20.25 471.9,20.82 473.2,21.08 474.5,20.98 475.8,21.20 477.1,20.90 478.4,20.68 479.7,20.69 481.0,19.78 482.3,20.72 483.6,20.30 484.9,20.94 486.2,20.61 487.5,21.26 488.8,20.80 490.1,21.27 491.4,19.83 492.7,20.20 494.0,20.92 495.3,20.35 496.6,19.43 497.9,21.09 499.2,19.66 500.5,20.44 501.8,20.31 503.1,19.63 504.4,20.51 505.7,20.29 507.0,19.92 508.3,19.34 509.6,20.61 510.9,19.64 512.2,19.89 513.5,20.03 514.8,20.49 516.1,20.60 517.4,21.19 518.7,21.04 520.0,21.16 521.3,19.82 522.6,20.79 523.9,20.97 525.2,21.13 526.5,19.62 527.8,19.56 529.1,19.96 530.4,20.74 531.7,20.82 533.0,20.71 534.3,20.38 535.6,20.98 536.9,20.41 538.2,20.77 539.5,19.38 540.8,19.35 542.1,20.21 543.4,20.81 544.7,19.37 546.0,20.68 547.3,20.59 548.6,21.30 549.9,20.54 551.2,20.35 552.5,20.29 553.8,20.90 555.1,20.29 556.4,21.29 557.7,20.77 559.0,21.12 560.3,20.50 561.6,21.22 562.9,21.26 564.2,20.69 565.5,20.83 566.8,20.13 568.1,20.24 569.4,19.80 570.7,19.98 572.0,19.87 573.3,19.54 574.6,20.52 575.9,20.65 577.2,19.33 578.5,21.00 579.8,19.85 581.1,20.01 582.4,21.21 583.7,19.63 585.0,19.52 586.3,20.05 587.6,19.83 588.9,19.68 590.2,21.02 591.5,20.25 592.8,20.29 594.1,19.63 595.4,19.69 596.7,19.65 598.0,20.13 599.3,19.51 600.6,19.93 601.9,19.91 603.2,20.84 604.5,21.24 605.8,21.03 607.1,20.58 608.4,21.09 609.7,19.63 611.0,20.18 612.3,20.04 613.6,20.05 614.4,28.3" fill="#a2d07f"/><polygon points="0.0,39.6 0.0,35.24 1.3,35.62 2.6,36.59 3.9,35.00 5.2,35.10 6.5,35.59 7.8,35.53 9.1,35.28 10.4,36.47 11.7,35.13 13.0,36.10 14.3,36.45 15.6,36.07 16.9,35.14 18.2,36.19 19.5,35.12 20.8,34.65 22.1,35.61 23.4,35.83 24.7,35.64 26.0,35.23 27.3,35.07 28.6,35.37 29.9,35.31 31.2,36.45 32.5,36.31 33.8,36.09 35.1,35.11 36.4,35.99 37.7,35.46 39.0,36.58 40.3,36.48 41.6,36.06 42.9,35.26 44.2,35.22 45.5,35.25 46.8,36.02 48.1,35.57 49.4,35.67 50.7,35.67 52.0,36.36 53.3,34.81 54.6,36.20 55.9,34.64 57.2,34.73 58.5,36.56 59.8,35.68 61.1,34.96 62.4,34.66 63.7,35.70 65.0,36.06 66.3,36.18 67.6,34.71 68.9,36.18 70.2,35.44 71.5,36.32 72.8,35.55 74.1,34.69 75.4,36.33 76.7,34.96 78.0,35.58 79.3,34.83 80.6,35.19 81.9,36.14 83.2,34.80 84.5,35.63 85.8,36.55 87.1,36.59 88.4,35.62 89.7,35.70 91.0,36.00 92.3,36.32 93.6,35.91 94.9,35.97 96.2,34.92 97.5,36.60 98.8,35.10 100.1,34.92 101.4,36.36 102.7,34.75 104.0,35.17 105.3,34.80 106.6,36.02 107.9,35.86 109.2,35.81 110.5,34.60 111.8,35.42 113.1,35.88 114.4,35.74 115.7,36.05 117.0,36.50 118.3,36.40 119.6,34.93 120.9,36.03 122.2,34.73 123.5,36.10 124.8,36.07 126.1,35.58 127.4,36.22 128.7,35.85 130.0,34.69 131.3,34.83 132.6,34.98 133.9,35.34 135.2,34.77 136.5,34.72 137.8,35.50 139.1,35.16 140.4,36.50 141.7,35.14 143.0,35.70 144.3,35.09 145.6,35.31 146.9,36.03 148.2,36.50 149.5,34.75 150.8,36.35 152.1,35.66 153.4,35.91 154.7,36.00 156.0,35.12 157.3,34.65 158.6,36.08 159.9,35.29 161.2,36.00 162.5,35.49 163.8,35.81 165.1,36.27 166.4,36.28 167.7,36.18 169.0,34.79 170.3,35.61 171.6,36.16 172.9,34.79 174.2,34.61 175.5,35.70 176.8,36.32 178.1,36.22 179.4,36.42 180.7,35.92 182.0,36.42 183.3,36.12 184.6,36.08 185.9,35.46 187.2,34.83 188.5,35.10 189.8,35.77 191.1,35.77 192.4,35.55 193.7,35.85 195.0,35.92 196.3,36.48 197.6,36.04 198.9,34.66 200.2,36.35 201.5,35.59 202.8,35.34 204.1,34.87 205.4,36.17 206.7,36.06 208.0,36.10 209.3,35.80 210.6,35.71 211.9,34.69 213.2,34.90 214.5,34.85 215.8,36.56 217.1,36.54 218.4,35.18 219.7,34.81 221.0,35.65 222.3,35.43 223.6,36.60 224.9,35.82 226.2,34.75 227.5,34.95 228.8,34.89 230.1,34.66 231.4,36.10 232.7,36.38 234.0,36.29 235.3,35.56 236.6,35.24 237.9,34.72 239.2,35.16 240.5,35.31 241.8,35.07 243.1,35.69 244.4,35.50 245.7,36.52 247.0,35.04 248.3,36.13 249.6,34.76 250.9,35.31 252.2,35.99 253.5,36.34 254.8,36.10 256.1,35.33 257.4,35.20 258.7,36.38 260.0,36.46 261.3,35.55 262.6,35.43 263.9,35.82 265.2,36.15 266.5,35.40 267.8,36.58 269.1,36.00 270.4,35.68 271.7,34.68 273.0,35.31 274.3,34.83 275.6,35.65 276.9,36.13 278.2,36.11 279.5,34.68 280.8,35.19 282.1,35.99 283.4,36.56 284.7,35.60 286.0,35.25 287.3,35.76 288.6,36.09 289.9,35.27 291.2,34.75 292.5,36.15 293.8,36.53 295.1,35.92 296.4,35.76 297.7,35.23 299.0,36.20 300.3,35.01 301.6,35.12 302.9,35.59 304.2,36.19 305.5,34.66 306.8,35.98 308.1,34.96 309.4,36.14 310.7,36.16 312.0,35.08 313.3,36.01 314.6,34.70 315.9,35.61 317.2,36.23 318.5,36.15 319.8,35.77 321.1,35.27 322.4,34.70 323.7,36.31 325.0,35.81 326.3,36.17 327.6,34.65 328.9,36.32 330.2,36.50 331.5,36.48 332.8,35.81 334.1,34.80 335.4,34.83 336.7,35.13 338.0,34.60 339.3,34.74 340.6,35.94 341.9,36.23 343.2,34.73 344.5,35.11 345.8,36.54 347.1,35.27 348.4,35.84 349.7,35.85 351.0,35.94 352.3,36.26 353.6,36.59 354.9,36.04 356.2,35.90 357.5,34.69 358.8,36.35 360.1,34.67 361.4,36.19 362.7,35.89 364.0,34.96 365.3,34.96 366.6,35.74 367.9,36.50 369.2,35.65 370.5,35.85 371.8,34.76 373.1,36.21 374.4,35.87 375.7,34.81 377.0,36.54 378.3,35.78 379.6,34.98 380.9,35.07 382.2,36.52 383.5,36.53 384.8,36.47 386.1,34.76 387.4,36.09 388.7,35.11 390.0,34.80 391.3,35.92 392.6,36.06 393.9,34.68 395.2,35.37 396.5,36.08 397.8,35.17 399.1,35.97 400.4,36.05 401.7,36.59 403.0,35.09 404.3,34.77 405.6,35.33 406.9,34.71 408.2,36.55 409.5,36.13 410.8,35.65 412.1,34.69 413.4,34.69 414.7,35.83 416.0,36.10 417.3,35.74 418.6,35.61 419.9,34.74 421.2,36.23 422.5,34.99 423.8,35.12 425.1,34.95 426.4,35.05 427.7,35.39 429.0,35.94 430.3,35.96 431.6,35.88 432.9,35.04 434.2,36.44 435.5,36.21 436.8,35.09 438.1,36.11 439.4,36.47 440.7,36.53 442.0,35.49 443.3,35.95 444.6,34.64 445.9,34.83 447.2,34.62 448.5,36.07 449.8,36.43 451.1,36.41 452.4,35.60 453.7,35.18 455.0,35.71 456.3,36.13 457.6,35.77 458.9,35.36 460.2,35.25 461.5,35.10 462.8,34.91 464.1,35.27 465.4,36.36 466.7,34.92 468.0,36.01 469.3,35.47 470.6,35.85 471.9,35.12 473.2,36.20 474.5,36.11 475.8,36.11 477.1,36.29 478.4,34.83 479.7,35.44 481.0,35.95 482.3,35.81 483.6,34.62 484.9,35.59 486.2,36.14 487.5,34.98 488.8,35.29 490.1,34.62 491.4,36.40 492.7,35.65 494.0,34.96 495.3,34.92 496.6,34.77 497.9,36.52 499.2,36.01 500.5,36.36 501.8,36.22 503.1,34.65 504.4,35.43 505.7,34.74 507.0,35.86 508.3,34.87 509.6,35.70 510.9,36.08 512.2,35.04 513.5,34.71 514.8,36.39 516.1,35.41 517.4,35.36 518.7,36.16 520.0,35.86 521.3,36.32 522.6,36.19 523.9,36.09 525.2,35.40 526.5,35.30 527.8,36.19 529.1,36.58 530.4,35.95 531.7,35.24 533.0,36.23 534.3,35.98 535.6,36.19 536.9,35.01 538.2,35.50 539.5,36.47 540.8,36.40 542.1,35.81 543.4,35.50 544.7,35.32 546.0,36.42 547.3,36.27 548.6,35.21 549.9,35.78 551.2,36.03 552.5,35.98 553.8,34.69 555.1,35.98 556.4,35.47 557.7,35.89 559.0,35.77 560.3,34.87 561.6,34.61 562.9,35.87 564.2,36.21 565.5,35.14 566.8,36.19 568.1,36.59 569.4,34.80 570.7,35.75 572.0,34.96 573.3,35.79 574.6,34.83 575.9,35.68 577.2,36.27 578.5,36.57 579.8,35.50 581.1,35.32 582.4,34.78 583.7,36.42 585.0,35.36 586.3,35.86 587.6,35.59 588.9,36.31 590.2,36.03 591.5,35.56 592.8,34.75 594.1,36.38 595.4,35.62 596.7,34.99 598.0,34.67 599.3,36.21 600.6,36.35 601.9,34.71 603.2,34.65 604.5,35.63 605.8,36.49 607.1,34.75 608.4,35.82 609.7,34.79 611.0,35.36 612.3,34.95 613.6,36.28 614.4,39.6" fill="#a2d07f"/><polygon points="616.3,28.3 616.3,20.69 617.6,22.34 618.9,21.75 620.2,20.35 621.5,20.35 622.8,22.30 624.1,22.15 625.4,21.53 626.7,21.11 628.0,21.49 629.3,22.29 630.6,21.85 631.9,20.25 633.2,19.63 634.5,22.40 635.8,20.63 637.1,19.93 638.4,22.30 639.7,19.55 641.0,21.95 642.3,20.26 643.6,20.38 644.9,20.07 646.2,21.14 647.5,20.69 648.8,20.07 650.1,20.58 651.4,19.70 652.7,20.41 654.0,20.40 655.3,21.86 656.6,19.65 657.9,20.07 659.2,20.96 660.5,18.96 661.8,18.84 663.1,20.00 664.4,21.01 665.7,19.85 667.0,21.20 668.3,21.08 669.6,19.87 670.9,21.15 672.2,19.74 673.5,19.42 674.8,21.23 676.1,18.83 677.4,20.99 678.7,18.34 680.0,18.11 681.3,19.13 682.6,20.95 683.9,19.07 685.2,19.54 686.5,17.13 687.8,20.46 689.1,17.40 690.4,16.76 691.7,17.82 693.0,17.42 694.3,20.01 695.6,16.59 696.9,18.65 698.2,16.59 699.5,16.71 700.8,19.93 702.1,17.16 702.7,28.3" fill="#a2d07f"/><polygon points="616.3,39.6 616.3,33.02 617.6,35.77 618.9,34.82 620.2,33.48 621.5,35.40 622.8,32.95 624.1,34.97 625.4,33.14 626.7,35.36 628.0,34.13 629.3,32.69 630.6,35.07 631.9,34.86 633.2,34.00 634.5,34.61 635.8,35.57 637.1,35.04 638.4,35.09 639.7,32.33 641.0,33.21 642.3,32.41 643.6,34.97 644.9,32.73 646.2,35.12 647.5,33.58 648.8,33.17 650.1,34.15 651.4,32.23 652.7,33.37 654.0,33.25 655.3,32.09 656.6,34.98 657.9,31.60 659.2,32.94 660.5,33.81 661.8,32.23 663.1,34.25 664.4,31.42 665.7,32.98 667.0,33.80 668.3,32.19 669.6,33.42 670.9,34.45 672.2,32.17 673.5,34.91 674.8,31.80 676.1,34.04 677.4,32.46 678.7,31.02 680.0,32.61 681.3,32.26 682.6,33.68 683.9,34.94 685.2,34.78 686.5,34.28 687.8,32.30 689.1,33.04 690.4,32.67 691.7,31.02 693.0,34.24 694.3,33.81 695.6,31.95 696.9,34.64 698.2,34.71 699.5,33.15 700.8,34.21 702.1,33.09 702.7,39.6" fill="#a2d07f"/><path d="M0 22.300 H702.700" stroke="#c4c8bc" stroke-width="1.300"/><path d="M0 23.400 H702.700" stroke="#3e6a1e" stroke-width="0.900" opacity="0.800"/></svg>
<div style="left:874px;top:778px;width:1.3px;height:39.5px;background:#1e1e1e;"></div>
<div style="left:260.5px;top:794.5px;width:5.5px;height:21px;background:rgba(10,25,0,0.55);border:1.5px solid #b0b8a4;border-radius:1.5px;"></div>
<svg style="left:825.8px;top:794.5px;" width="97.20000000000005" height="22.799999999999955" viewBox="0 0 97.20000000000005 22.799999999999955"><rect x="1" y="1" width="95.20000000000005" height="20.799999999999955" rx="1.500" fill="rgba(8,22,0,0.62)" stroke="#b4c0a6" stroke-width="1.700"/><rect x="2.300" y="2.300" width="92.60000000000005" height="18.199999999999953" fill="none" stroke="#0c1a04" stroke-width="0.800"/><path d="M2.500 20.299999999999955 Q29.2 20.5 94.70000000000005 2.500 M2.500 2.500 Q68.0 20.5 94.70000000000005 20.299999999999955" fill="none" stroke="#9aa88c" stroke-width="0.900"/><path d="M48.6 1 V21.799999999999955" stroke="#b4c0a6" stroke-width="1"/></svg>
<div style="left:826px;top:799.8px;width:97px;height:1.2px;background:#b4baa8;"></div>
<span id="t105" style="left:833.5px;top:779.0px;font-size:13px;line-height:16px;color:#f0f0f0;font-family:"DejaVu Sans",sans-serif;">♫</span>
<span id="t106" style="left:921.5px;top:779.0px;font-size:13px;line-height:16px;color:#f0f0f0;font-family:"DejaVu Sans",sans-serif;">♫</span>
<span id="t107" style="left:855px;top:780.0px;font-size:12px;line-height:16px;color:#5f8c3e;font-style:italic;transform:scaleX(1.0167);transform-origin:0 50%;">fx</span>
<span id="t108" style="left:943px;top:780.0px;font-size:12px;line-height:16px;color:#5f8c3e;font-style:italic;transform:scaleX(1.0167);transform-origin:0 50%;">fx</span>
<div style="left:749.3px;top:819.2px;width:159.70000000000005px;height:39.3px;background:#2d590c;border-radius:2px;"></div>
<svg style="left:749.3px;top:819.2px;" width="160" height="40" viewBox="0 0 160 40"><polygon points="0.0,28.2 0.0,27.00 1.2,26.59 2.4,26.56 3.6,26.97 4.8,26.47 6.0,26.61 7.2,26.99 8.4,25.99 9.6,26.80 10.8,26.89 12.0,26.93 13.2,26.17 14.4,25.79 15.6,25.85 16.8,26.33 18.0,26.48 19.2,26.82 20.4,25.74 21.6,25.79 22.8,26.07 24.0,25.46 25.2,25.73 26.4,24.68 27.6,24.95 28.8,25.84 30.0,24.32 31.2,26.11 32.4,24.88 33.6,25.06 34.8,25.36 36.0,25.73 37.2,23.66 38.4,25.67 39.6,23.99 40.8,22.65 42.0,24.98 43.2,24.69 44.4,23.20 45.6,23.39 46.8,22.77 48.0,21.99 49.2,24.23 50.4,23.61 51.6,23.54 52.8,24.46 54.0,20.91 55.2,21.22 56.4,21.39 57.6,24.37 58.8,20.62 60.0,20.98 61.2,22.17 62.4,20.87 63.6,22.14 64.8,23.15 66.0,23.69 67.2,23.11 68.4,24.00 69.6,22.65 70.8,20.79 72.0,21.09 73.2,20.47 74.4,21.14 75.6,23.19 76.8,22.01 78.0,22.60 79.2,21.22 80.4,22.44 81.6,23.60 82.8,22.21 84.0,21.11 85.2,24.10 86.4,21.78 87.6,25.03 88.8,24.28 90.0,24.48 91.2,22.94 92.4,22.48 93.6,23.28 94.8,24.68 96.0,23.24 97.2,24.92 98.4,25.27 99.6,23.69 100.8,24.54 102.0,24.53 103.2,24.73 104.4,24.19 105.6,25.40 106.8,24.77 108.0,25.17 109.2,24.99 110.4,25.86 111.6,25.44 112.8,25.80 114.0,26.30 115.2,26.51 116.4,25.95 117.6,26.81 118.8,25.68 120.0,26.80 121.2,27.00 122.4,26.92 123.6,25.91 124.8,26.68 126.0,26.96 127.2,27.12 128.4,27.13 129.6,26.39 130.8,26.49 132.0,26.44 133.2,26.42 134.4,27.17 135.6,26.62 136.8,26.87 138.0,26.40 139.2,26.42 140.4,26.35 141.6,27.22 142.8,26.40 144.0,26.36 145.2,26.33 146.4,27.20 147.6,27.10 148.8,27.20 150.0,27.28 151.2,26.46 152.4,26.50 153.6,26.68 154.8,26.49 156.0,26.68 157.2,27.03 158.4,27.22 159.6,27.22 159.7,28.2" fill="#a2d07f"/><polygon points="0.0,39.4 0.0,37.95 1.2,38.70 2.4,38.53 3.6,38.37 4.8,38.94 6.0,38.58 7.2,38.53 8.4,37.85 9.6,38.36 10.8,38.41 12.0,37.33 13.2,38.05 14.4,37.41 15.6,37.77 16.8,38.79 18.0,38.05 19.2,37.96 20.4,37.23 21.6,38.05 22.8,37.22 24.0,37.51 25.2,38.19 26.4,36.58 27.6,38.41 28.8,36.46 30.0,38.12 31.2,38.55 32.4,37.92 33.6,36.14 34.8,35.33 36.0,38.39 37.2,36.68 38.4,36.58 39.6,35.35 40.8,37.55 42.0,36.26 43.2,36.76 44.4,34.63 45.6,36.96 46.8,33.83 48.0,36.71 49.2,36.97 50.4,34.56 51.6,35.44 52.8,37.32 54.0,34.56 55.2,37.39 56.4,33.58 57.6,33.98 58.8,33.41 60.0,34.23 61.2,35.71 62.4,35.42 63.6,35.44 64.8,32.58 66.0,37.18 67.2,32.57 68.4,37.53 69.6,36.50 70.8,36.19 72.0,32.60 73.2,34.90 74.4,35.62 75.6,32.90 76.8,36.51 78.0,35.34 79.2,35.04 80.4,33.97 81.6,34.09 82.8,34.73 84.0,36.28 85.2,36.46 86.4,37.32 87.6,34.31 88.8,35.24 90.0,35.03 91.2,37.49 92.4,36.50 93.6,35.33 94.8,36.18 96.0,37.89 97.2,36.80 98.4,35.51 99.6,37.70 100.8,37.91 102.0,37.64 103.2,36.58 104.4,36.31 105.6,38.22 106.8,38.26 108.0,38.08 109.2,37.95 110.4,37.56 111.6,38.41 112.8,38.10 114.0,38.42 115.2,36.93 116.4,37.47 117.6,38.67 118.8,37.17 120.0,38.71 121.2,38.26 122.4,37.31 123.6,37.66 124.8,37.80 126.0,38.28 127.2,38.66 128.4,38.03 129.6,38.81 130.8,38.68 132.0,38.44 133.2,38.94 134.4,38.45 135.6,37.93 136.8,38.07 138.0,38.34 139.2,38.17 140.4,38.40 141.6,38.83 142.8,38.23 144.0,38.49 145.2,38.07 146.4,37.86 147.6,38.47 148.8,38.29 150.0,38.07 151.2,38.49 152.4,38.73 153.6,38.11 154.8,37.91 156.0,38.05 157.2,38.14 158.4,37.95 159.6,38.17 159.7,39.4" fill="#a2d07f"/><path d="M0 21.300 H159.700" stroke="#c4c8bc" stroke-width="1.300"/></svg>
<svg style="left:749.3px;top:835.5px;" width="48.700000000000045" height="23.0" viewBox="0 0 48.700000000000045 23.0"><rect x="1" y="1" width="46.700000000000045" height="21.0" rx="1.500" fill="rgba(8,22,0,0.62)" stroke="#b4c0a6" stroke-width="1.700"/><rect x="2.300" y="2.300" width="44.100000000000044" height="18.4" fill="none" stroke="#0c1a04" stroke-width="0.800"/><path d="M2.500 20.5 Q21.9 5.8 46.200000000000045 2.500" fill="none" stroke="#8fa07c" stroke-width="0.900"/></svg>
<svg style="left:857.8px;top:835.5px;" width="51.200000000000045" height="23.0" viewBox="0 0 51.200000000000045 23.0"><rect x="1" y="1" width="49.200000000000045" height="21.0" rx="1.500" fill="rgba(8,22,0,0.62)" stroke="#b4c0a6" stroke-width="1.700"/><rect x="2.300" y="2.300" width="46.600000000000044" height="18.4" fill="none" stroke="#0c1a04" stroke-width="0.800"/><path d="M2.500 2.500 Q28.2 5.8 48.700000000000045 20.5" fill="none" stroke="#8fa07c" stroke-width="0.900"/></svg>
<svg style="left:749.3px;top:819.2px;" width="4.5" height="4.5" viewBox="0 0 4.5 4.5"><path d="M0 0 H4.500 L0 4.500 Z" fill="#f0f0f0"/></svg>
<svg style="left:868px;top:823px;" width="10.5" height="10.5" viewBox="0 0 10.5 10.5"><polygon points="6.27,0.10 6.24,3.77 9.62,2.33 7.00,4.90 10.40,6.27 6.73,6.24 8.17,9.62 5.60,7.00 4.23,10.40 4.26,6.73 0.88,8.17 3.50,5.60 0.10,4.23 3.77,4.26 2.33,0.88 4.90,3.50" fill="#f0f0f0"/></svg>
<span id="t109" style="left:890px;top:820.5px;font-size:12.5px;line-height:16px;color:#f0f0f0;font-style:italic;transform:scaleX(1.0273);transform-origin:0 50%;">fx</span>
<div style="left:722px;top:860.2px;width:80.79999999999995px;height:39.3px;background:#2d590c;border-radius:2px;"></div>
<svg style="left:722px;top:860.2px;" width="80.79999999999995" height="40" viewBox="0 0 80.79999999999995 40"><polygon points="0.0,28.2 0.0,19.35 1.2,20.53 2.4,21.41 3.6,19.61 4.8,22.76 6.0,20.93 7.2,18.89 8.4,19.36 9.6,19.89 10.8,22.09 12.0,21.16 13.2,21.04 14.4,20.17 15.6,21.39 16.8,20.00 18.0,18.68 19.2,22.75 20.4,20.29 21.6,19.69 22.8,21.80 24.0,21.32 25.2,18.87 26.4,23.74 27.6,21.21 28.8,23.19 30.0,20.13 31.2,19.41 32.4,21.55 33.6,23.64 34.8,21.39 36.0,21.61 37.2,20.82 38.4,21.85 39.6,21.31 40.8,20.49 42.0,21.97 43.2,22.53 44.4,20.16 45.6,23.53 46.8,21.47 48.0,22.81 49.2,21.25 50.4,24.08 51.6,20.43 52.8,23.16 54.0,24.47 55.2,23.60 56.4,23.13 57.6,24.75 58.8,23.15 60.0,23.19 61.2,22.14 62.4,23.56 63.6,23.94 64.8,24.14 66.0,22.22 67.2,21.54 68.4,23.15 69.6,24.33 70.8,22.26 72.0,23.80 73.2,24.48 74.4,24.82 75.6,22.61 76.8,22.56 78.0,23.22 79.2,23.83 80.4,23.58 80.8,28.2" fill="#a2d07f"/><polygon points="0.0,39.4 0.0,36.04 1.2,31.67 2.4,35.34 3.6,33.68 4.8,32.67 6.0,32.73 7.2,34.78 8.4,35.81 9.6,34.39 10.8,36.81 12.0,32.87 13.2,35.58 14.4,32.87 15.6,36.11 16.8,35.54 18.0,36.23 19.2,35.33 20.4,36.64 21.6,37.63 22.8,33.87 24.0,36.21 25.2,36.42 26.4,36.15 27.6,35.27 28.8,35.56 30.0,34.55 31.2,34.48 32.4,35.98 33.6,33.24 34.8,33.65 36.0,37.53 37.2,33.88 38.4,33.56 39.6,34.17 40.8,37.20 42.0,34.05 43.2,35.00 44.4,37.83 45.6,37.86 46.8,33.70 48.0,35.05 49.2,36.86 50.4,37.52 51.6,37.36 52.8,37.00 54.0,34.74 55.2,36.58 56.4,37.40 57.6,34.36 58.8,34.86 60.0,37.40 61.2,34.56 62.4,35.71 63.6,35.08 64.8,35.56 66.0,34.74 67.2,35.19 68.4,35.05 69.6,37.45 70.8,35.67 72.0,36.29 73.2,35.58 74.4,36.69 75.6,35.18 76.8,36.35 78.0,37.37 79.2,37.50 80.4,37.83 80.8,39.4" fill="#a2d07f"/><path d="M0 17 H80.79999999999995" stroke="#c4c8bc" stroke-width="1.300"/></svg>
<svg style="left:722px;top:876.5px;" width="36" height="23.0" viewBox="0 0 36 23.0"><rect x="1" y="1" width="34" height="21.0" rx="1.500" fill="rgba(8,22,0,0.62)" stroke="#b4c0a6" stroke-width="1.700"/><rect x="2.300" y="2.300" width="31.4" height="18.4" fill="none" stroke="#0c1a04" stroke-width="0.800"/><path d="M2.500 20.5 Q16.2 5.8 33.5 2.500" fill="none" stroke="#8fa07c" stroke-width="0.900"/></svg>
<svg style="left:781.5px;top:876.5px;" width="21.299999999999955" height="23.0" viewBox="0 0 21.299999999999955 23.0"><rect x="1" y="1" width="19.299999999999955" height="21.0" rx="1.500" fill="rgba(8,22,0,0.62)" stroke="#b4c0a6" stroke-width="1.700"/><rect x="2.300" y="2.300" width="16.699999999999953" height="18.4" fill="none" stroke="#0c1a04" stroke-width="0.800"/><path d="M2.500 2.500 Q11.7 5.8 18.799999999999955 20.5" fill="none" stroke="#8fa07c" stroke-width="0.900"/></svg>
<svg style="left:722px;top:860.2px;" width="4.5" height="4.5" viewBox="0 0 4.5 4.5"><path d="M0 0 H4.500 L0 4.500 Z" fill="#f0f0f0"/></svg>
<svg style="left:762.5px;top:863.8px;" width="10.5" height="10.5" viewBox="0 0 10.5 10.5"><polygon points="6.27,0.10 6.24,3.77 9.62,2.33 7.00,4.90 10.40,6.27 6.73,6.24 8.17,9.62 5.60,7.00 4.23,10.40 4.26,6.73 0.88,8.17 3.50,5.60 0.10,4.23 3.77,4.26 2.33,0.88 4.90,3.50" fill="#f0f0f0"/></svg>
<span id="t110" style="left:784px;top:861.5px;font-size:12.5px;line-height:16px;color:#f0f0f0;font-style:italic;transform:scaleX(1.0273);transform-origin:0 50%;">fx</span>
<div style="left:849px;top:860.2px;width:74.79999999999995px;height:39.3px;background:#2d590c;border-radius:2px;"></div>
<svg style="left:849px;top:860.2px;" width="74.79999999999995" height="40" viewBox="0 0 74.79999999999995 40"><polygon points="0.0,28.2 0.0,20.24 1.2,22.89 2.4,20.51 3.6,22.46 4.8,20.48 6.0,20.50 7.2,20.32 8.4,18.54 9.6,23.45 10.8,18.81 12.0,20.96 13.2,20.49 14.4,19.99 15.6,19.10 16.8,21.68 18.0,21.50 19.2,18.68 20.4,23.42 21.6,20.52 22.8,20.59 24.0,23.78 25.2,20.85 26.4,20.55 27.6,19.37 28.8,22.43 30.0,19.28 31.2,21.65 32.4,21.83 33.6,19.91 34.8,24.09 36.0,20.91 37.2,21.41 38.4,22.79 39.6,20.45 40.8,22.77 42.0,22.34 43.2,22.17 44.4,21.15 45.6,23.65 46.8,22.73 48.0,22.84 49.2,22.34 50.4,21.26 51.6,23.54 52.8,21.40 54.0,23.19 55.2,22.84 56.4,23.82 57.6,22.95 58.8,21.19 60.0,22.50 61.2,22.04 62.4,23.84 63.6,23.94 64.8,24.05 66.0,23.06 67.2,22.95 68.4,22.49 69.6,25.15 70.8,22.84 72.0,22.35 73.2,23.57 74.4,25.27 74.8,28.2" fill="#a2d07f"/><polygon points="0.0,39.4 0.0,35.60 1.2,37.38 2.4,36.31 3.6,32.03 4.8,33.91 6.0,33.67 7.2,32.96 8.4,32.32 9.6,34.06 10.8,34.07 12.0,34.06 13.2,33.71 14.4,34.31 15.6,33.89 16.8,36.46 18.0,34.05 19.2,35.20 20.4,33.63 21.6,37.13 22.8,36.74 24.0,37.50 25.2,33.76 26.4,33.10 27.6,34.45 28.8,35.92 30.0,33.72 31.2,33.94 32.4,35.07 33.6,36.57 34.8,36.39 36.0,35.85 37.2,36.36 38.4,35.87 39.6,34.94 40.8,33.66 42.0,37.66 43.2,35.40 44.4,37.76 45.6,37.43 46.8,34.47 48.0,35.52 49.2,34.11 50.4,36.14 51.6,37.96 52.8,36.45 54.0,35.65 55.2,34.31 56.4,34.19 57.6,36.23 58.8,36.51 60.0,37.73 61.2,35.69 62.4,37.36 63.6,37.60 64.8,38.12 66.0,38.18 67.2,35.76 68.4,37.79 69.6,34.87 70.8,37.95 72.0,35.31 73.2,37.85 74.4,38.24 74.8,39.4" fill="#a2d07f"/><path d="M0 17 H74.79999999999995" stroke="#c4c8bc" stroke-width="1.300"/></svg>
<svg style="left:849px;top:876.5px;" width="11.5" height="23.0" viewBox="0 0 11.5 23.0"><rect x="1" y="1" width="9.5" height="21.0" rx="1.500" fill="rgba(8,22,0,0.62)" stroke="#b4c0a6" stroke-width="1.700"/><rect x="2.300" y="2.300" width="6.9" height="18.4" fill="none" stroke="#0c1a04" stroke-width="0.800"/><path d="M2.500 20.5 Q5.2 5.8 9.0 2.500" fill="none" stroke="#8fa07c" stroke-width="0.900"/></svg>
<svg style="left:890.6px;top:876.5px;" width="33.19999999999993" height="23.0" viewBox="0 0 33.19999999999993 23.0"><rect x="1" y="1" width="31.199999999999932" height="21.0" rx="1.500" fill="rgba(8,22,0,0.62)" stroke="#b4c0a6" stroke-width="1.700"/><rect x="2.300" y="2.300" width="28.59999999999993" height="18.4" fill="none" stroke="#0c1a04" stroke-width="0.800"/><path d="M2.500 2.500 Q18.3 5.8 30.699999999999932 20.5" fill="none" stroke="#8fa07c" stroke-width="0.900"/></svg>
<svg style="left:849px;top:860.2px;" width="4.5" height="4.5" viewBox="0 0 4.5 4.5"><path d="M0 0 H4.500 L0 4.500 Z" fill="#f0f0f0"/></svg>
<svg style="left:883px;top:863.8px;" width="10.5" height="10.5" viewBox="0 0 10.5 10.5"><polygon points="6.27,0.10 6.24,3.77 9.62,2.33 7.00,4.90 10.40,6.27 6.73,6.24 8.17,9.62 5.60,7.00 4.23,10.40 4.26,6.73 0.88,8.17 3.50,5.60 0.10,4.23 3.77,4.26 2.33,0.88 4.90,3.50" fill="#f0f0f0"/></svg>
<span id="t111" style="left:904.7px;top:861.5px;font-size:12.5px;line-height:16px;color:#f0f0f0;font-style:italic;transform:scaleX(1.0273);transform-origin:0 50%;">fx</span>
<div style="left:270px;top:860px;width:211px;height:40px;background:#4a17c6;border:2.500px solid #ffffff;border-radius:2px;box-shadow:inset 0 0 0 0.700px #1a0a40;"></div>
<svg style="left:273px;top:860px;" width="205" height="40" viewBox="0 0 205 40"><polygon points="0,27.5 0.0,22.78 1.5,22.67 3.0,22.81 4.5,22.74 6.0,22.77 7.5,23.10 9.0,23.17 10.5,22.80 12.0,23.14 13.5,23.20 15.0,22.86 16.5,23.17 18.0,23.03 19.5,23.25 21.0,23.22 22.5,23.50 24.0,23.31 25.5,23.23 27.0,23.45 28.5,23.38 30.0,23.46 31.5,23.81 33.0,23.50 34.5,23.63 36.0,23.81 37.5,23.99 39.0,23.61 40.5,23.85 42.0,23.77 43.5,23.73 45.0,23.85 46.5,23.79 48.0,24.09 49.5,23.93 51.0,24.15 52.5,23.94 54.0,24.01 55.5,24.44 57.0,24.46 58.5,24.45 60.0,24.12 61.5,24.42 63.0,24.36 64.5,24.56 66.0,24.50 67.5,24.60 69.0,24.65 70.5,24.57 72.0,24.61 73.5,24.48 75.0,24.63 76.5,24.54 78.0,24.61 79.5,24.58 81.0,24.77 82.5,25.06 84.0,24.75 85.5,24.73 87.0,24.79 88.5,25.00 90.0,24.96 91.5,25.24 93.0,24.96 94.5,25.13 96.0,25.30 97.5,25.44 99.0,25.08 100.5,25.04 102.0,25.53 103.5,25.20 105.0,25.43 106.5,25.59 108.0,25.54 109.5,25.34 111.0,25.31 112.5,25.76 114.0,25.50 115.5,25.82 117.0,25.51 118.5,25.73 120.0,25.48 121.5,25.46 123.0,25.72 124.5,25.50 126.0,25.88 127.5,26.02 129.0,25.78 130.5,26.09 132.0,26.03 133.5,25.95 135.0,25.88 136.5,26.13 138.0,26.21 139.5,25.82 141.0,26.12 142.5,25.82 144.0,25.88 145.5,26.16 147.0,26.14 148.5,26.13 150.0,26.09 151.5,26.14 153.0,26.17 154.5,26.16 156.0,26.02 157.5,26.26 159.0,26.32 160.5,26.19 162.0,26.45 163.5,26.44 165.0,26.12 166.5,26.36 168.0,26.37 169.5,26.65 171.0,26.47 172.5,26.40 174.0,26.70 175.5,26.41 177.0,26.42 178.5,26.72 180.0,26.45 181.5,26.54 183.0,26.45 184.5,26.62 186.0,26.46 187.5,26.45 189.0,26.82 190.5,26.81 192.0,26.51 193.5,26.38 195.0,26.74 196.5,26.65 198.0,26.59 199.5,26.73 201.0,26.71 202.5,26.74 204.0,26.71 205,27.5" fill="#a9b4f6"/><polygon points="4,37 4.0,34.98 5.5,35.22 7.0,35.20 8.5,34.95 10.0,35.51 11.5,35.16 13.0,35.07 14.5,35.40 16.0,35.50 17.5,35.12 19.0,35.55 20.5,35.62 22.0,35.47 23.5,35.32 25.0,35.77 26.5,35.65 28.0,35.67 29.5,35.35 31.0,35.66 32.5,35.40 34.0,35.91 35.5,35.83 37.0,35.64 38.5,35.51 40.0,35.84 41.5,36.03 43.0,36.14 44.5,35.88 46.0,36.15 47.5,35.75 49.0,35.76 50.5,36.25 52.0,36.22 53.5,35.88 55.0,36.02 56.5,35.94 58.0,36.30 59.5,36.48 61.0,36.40 62.5,36.08 64.0,36.47 65.5,36.45 67.0,36.43 68.5,36.46 70.0,36.50 71.5,36.18 73.0,36.74 74.5,36.88 76.0,36.26 77.5,36.33 79.0,36.29 80,37" fill="#a9b4f6"/><path d="M0 22.200 H205" stroke="#a79ccb" stroke-width="1.500"/></svg>
<svg style="left:277.3px;top:876.4px;" width="10.4" height="10.4" viewBox="0 0 10.4 10.4"><rect x="0.500" y="0.500" width="9.400" height="9.400" rx="1" fill="#b4b4b8" stroke="#55506a" stroke-width="1"/><path d="M1.800 8.600 L8.600 1.800 V8.600 Z" fill="#26233a"/></svg>
<svg style="left:464.4px;top:876.4px;" width="10.4" height="10.4" viewBox="0 0 10.4 10.4"><rect x="0.500" y="0.500" width="9.400" height="9.400" rx="1" fill="#b4b4b8" stroke="#55506a" stroke-width="1"/><path d="M1.800 1.800 L8.600 8.600 H1.800 Z" fill="#26233a"/></svg>
<svg style="left:440px;top:863.8px;" width="10.5" height="10.5" viewBox="0 0 10.5 10.5"><polygon points="6.27,0.10 6.24,3.77 9.62,2.33 7.00,4.90 10.40,6.27 6.73,6.24 8.17,9.62 5.60,7.00 4.23,10.40 4.26,6.73 0.88,8.17 3.50,5.60 0.10,4.23 3.77,4.26 2.33,0.88 4.90,3.50" fill="#f0f0f0"/></svg>
<span id="t112" style="left:462px;top:861.5px;font-size:12.5px;line-height:16px;color:#f0f0f0;font-style:italic;transform:scaleX(1.0273);transform-origin:0 50%;">fx</span>
<div style="left:936.8px;top:598px;width:1.4px;height:352px;background:#3f8ff0;"></div>
<svg style="left:931px;top:587px;" width="13" height="12" viewBox="0 0 13 12"><path d="M0.400 0.800 Q0.400 0 1.200 0 H11.800 Q12.600 0 12.600 0.800 V7 L8.400 11.600 H4.600 L0.400 7 Z" fill="#3f95f5"/></svg>
<div style="left:1264px;top:604px;width:8px;height:10px;background:#383838;border-radius:4px 4px 0 0;"></div>
<div style="left:1264px;top:612px;width:8px;height:158px;background:#4b4b4b;"></div>
<div style="left:1264px;top:781px;width:8px;height:159px;background:#4b4b4b;"></div>
<div style="left:1264px;top:938px;width:8px;height:10px;background:#383838;border-radius:0 0 4px 4px;"></div>
<div style="left:1263.2px;top:609.2px;width:9.6px;height:9.6px;background:#1a1a1a;border:2px solid #d4d4d4;border-radius:50%;"></div>
<div style="left:1263.2px;top:763.2px;width:9.6px;height:9.6px;background:#1a1a1a;border:2px solid #d4d4d4;border-radius:50%;"></div>
<div style="left:1263.2px;top:778.2px;width:9.6px;height:9.6px;background:#1a1a1a;border:2px solid #d4d4d4;border-radius:50%;"></div>
<div style="left:1263.2px;top:933.2px;width:9.6px;height:9.6px;background:#1a1a1a;border:2px solid #d4d4d4;border-radius:50%;"></div>
<div style="left:68px;top:952.3px;width:1194px;height:8.6px;background:#323232;border-radius:4.300px;"></div>
<div style="left:72px;top:952.3px;width:108px;height:8.6px;background:#4b4b4b;"></div>
<div style="left:67.5px;top:951.8000000000001px;width:9.6px;height:9.6px;background:#1a1a1a;border:2px solid #d4d4d4;border-radius:50%;"></div>
<div style="left:175.79999999999998px;top:951.8000000000001px;width:9.6px;height:9.6px;background:#1a1a1a;border:2px solid #d4d4d4;border-radius:50%;"></div>
<div style="left:1290px;top:517px;width:81px;height:458px;background:#1e1e1e;"></div>
<div style="left:1304px;top:543.7px;width:31px;height:396.5px;background:#000000;"></div>
<div style="left:1319px;top:543.7px;width:1px;height:8.299999999999955px;background:#1e1e1e;"></div>
<div style="left:1304px;top:552px;width:31px;height:1px;background:#1e1e1e;"></div>
<svg style="left:1336px;top:540px;" width="5" height="400" viewBox="0 0 5 400"><path d="M0 15.50 H4" stroke="#a4a4a4" stroke-width="1"/><path d="M0 21.92 H2.4" stroke="#a4a4a4" stroke-width="1"/><path d="M0 28.33 H2.4" stroke="#a4a4a4" stroke-width="1"/><path d="M0 34.75 H2.4" stroke="#a4a4a4" stroke-width="1"/><path d="M0 41.17 H2.4" stroke="#a4a4a4" stroke-width="1"/><path d="M0 47.58 H2.4" stroke="#a4a4a4" stroke-width="1"/><path d="M0 54.00 H4" stroke="#a4a4a4" stroke-width="1"/><path d="M0 60.42 H2.4" stroke="#a4a4a4" stroke-width="1"/><path d="M0 66.83 H2.4" stroke="#a4a4a4" stroke-width="1"/><path d="M0 73.25 H2.4" stroke="#a4a4a4" stroke-width="1"/><path d="M0 79.67 H2.4" stroke="#a4a4a4" stroke-width="1"/><path d="M0 86.08 H2.4" stroke="#a4a4a4" stroke-width="1"/><path d="M0 92.50 H4" stroke="#a4a4a4" stroke-width="1"/><path d="M0 98.92 H2.4" stroke="#a4a4a4" stroke-width="1"/><path d="M0 105.33 H2.4" stroke="#a4a4a4" stroke-width="1"/><path d="M0 111.75 H2.4" stroke="#a4a4a4" stroke-width="1"/><path d="M0 118.17 H2.4" stroke="#a4a4a4" stroke-width="1"/><path d="M0 124.58 H2.4" stroke="#a4a4a4" stroke-width="1"/><path d="M0 131.00 H4" stroke="#a4a4a4" stroke-width="1"/><path d="M0 137.42 H2.4" stroke="#a4a4a4" stroke-width="1"/><path d="M0 143.83 H2.4" stroke="#a4a4a4" stroke-width="1"/><path d="M0 150.25 H2.4" stroke="#a4a4a4" stroke-width="1"/><path d="M0 156.67 H2.4" stroke="#a4a4a4" stroke-width="1"/><path d="M0 163.08 H2.4" stroke="#a4a4a4" stroke-width="1"/><path d="M0 169.50 H4" stroke="#a4a4a4" stroke-width="1"/><path d="M0 175.92 H2.4" stroke="#a4a4a4" stroke-width="1"/><path d="M0 182.33 H2.4" stroke="#a4a4a4" stroke-width="1"/><path d="M0 188.75 H2.4" stroke="#a4a4a4" stroke-width="1"/><path d="M0 195.17 H2.4" stroke="#a4a4a4" stroke-width="1"/><path d="M0 201.58 H2.4" stroke="#a4a4a4" stroke-width="1"/><path d="M0 208.00 H4" stroke="#a4a4a4" stroke-width="1"/><path d="M0 214.42 H2.4" stroke="#a4a4a4" stroke-width="1"/><path d="M0 220.83 H2.4" stroke="#a4a4a4" stroke-width="1"/><path d="M0 227.25 H2.4" stroke="#a4a4a4" stroke-width="1"/><path d="M0 233.67 H2.4" stroke="#a4a4a4" stroke-width="1"/><path d="M0 240.08 H2.4" stroke="#a4a4a4" stroke-width="1"/><path d="M0 246.50 H4" stroke="#a4a4a4" stroke-width="1"/><path d="M0 252.92 H2.4" stroke="#a4a4a4" stroke-width="1"/><path d="M0 259.33 H2.4" stroke="#a4a4a4" stroke-width="1"/><path d="M0 265.75 H2.4" stroke="#a4a4a4" stroke-width="1"/><path d="M0 272.17 H2.4" stroke="#a4a4a4" stroke-width="1"/><path d="M0 278.58 H2.4" stroke="#a4a4a4" stroke-width="1"/><path d="M0 285.00 H4" stroke="#a4a4a4" stroke-width="1"/><path d="M0 291.42 H2.4" stroke="#a4a4a4" stroke-width="1"/><path d="M0 297.83 H2.4" stroke="#a4a4a4" stroke-width="1"/><path d="M0 304.25 H2.4" stroke="#a4a4a4" stroke-width="1"/><path d="M0 310.67 H2.4" stroke="#a4a4a4" stroke-width="1"/><path d="M0 317.08 H2.4" stroke="#a4a4a4" stroke-width="1"/><path d="M0 323.50 H4" stroke="#a4a4a4" stroke-width="1"/><path d="M0 329.92 H2.4" stroke="#a4a4a4" stroke-width="1"/><path d="M0 336.33 H2.4" stroke="#a4a4a4" stroke-width="1"/><path d="M0 342.75 H2.4" stroke="#a4a4a4" stroke-width="1"/><path d="M0 349.17 H2.4" stroke="#a4a4a4" stroke-width="1"/><path d="M0 355.58 H2.4" stroke="#a4a4a4" stroke-width="1"/><path d="M0 362.00 H4" stroke="#a4a4a4" stroke-width="1"/><path d="M0 368.42 H2.4" stroke="#a4a4a4" stroke-width="1"/><path d="M0 374.83 H2.4" stroke="#a4a4a4" stroke-width="1"/><path d="M0 381.25 H2.4" stroke="#a4a4a4" stroke-width="1"/><path d="M0 387.67 H2.4" stroke="#a4a4a4" stroke-width="1"/><path d="M0 394.08 H2.4" stroke="#a4a4a4" stroke-width="1"/><path d="M0 400.50 H4" stroke="#a4a4a4" stroke-width="1"/></svg>
<span id="t113" style="left:1344px;top:547.5px;font-size:11px;line-height:16px;color:#b4b4b4;letter-spacing:-0.300px;">0</span>
<span id="t114" style="left:1344px;top:586.0px;font-size:11px;line-height:16px;color:#b4b4b4;letter-spacing:-0.300px;">-6</span>
<span id="t115" style="left:1344px;top:624.5px;font-size:11px;line-height:16px;color:#b4b4b4;letter-spacing:-0.300px;">-12</span>
<span id="t116" style="left:1344px;top:663.0px;font-size:11px;line-height:16px;color:#b4b4b4;letter-spacing:-0.300px;">-18</span>
<span id="t117" style="left:1344px;top:701.5px;font-size:11px;line-height:16px;color:#b4b4b4;letter-spacing:-0.300px;">-24</span>
<span id="t118" style="left:1344px;top:740.0px;font-size:11px;line-height:16px;color:#b4b4b4;letter-spacing:-0.300px;">-30</span>
<span id="t119" style="left:1344px;top:778.5px;font-size:11px;line-height:16px;color:#b4b4b4;letter-spacing:-0.300px;">-36</span>
<span id="t120" style="left:1344px;top:817.0px;font-size:11px;line-height:16px;color:#b4b4b4;letter-spacing:-0.300px;">-42</span>
<span id="t121" style="left:1344px;top:855.5px;font-size:11px;line-height:16px;color:#b4b4b4;letter-spacing:-0.300px;">-48</span>
<span id="t122" style="left:1344px;top:894.0px;font-size:11px;line-height:16px;color:#b4b4b4;letter-spacing:-0.300px;">-54</span>
<span id="t123" style="left:1344px;top:928.0px;font-size:11px;line-height:16px;color:#b4b4b4;letter-spacing:-0.300px;">dB</span>
<div style="left:1304px;top:939px;width:14.5px;height:1.3px;background:#eeee00;"></div>
<div style="left:1320px;top:939px;width:14.5px;height:1.3px;background:#eeee00;"></div>
<span id="t124" style="left:1308.5px;top:946.5px;font-size:9px;line-height:16px;color:#8a8a8a;">S</span>
<span id="t125" style="left:1324.5px;top:946.5px;font-size:9px;line-height:16px;color:#8a8a8a;">S</span>
</body></html>
